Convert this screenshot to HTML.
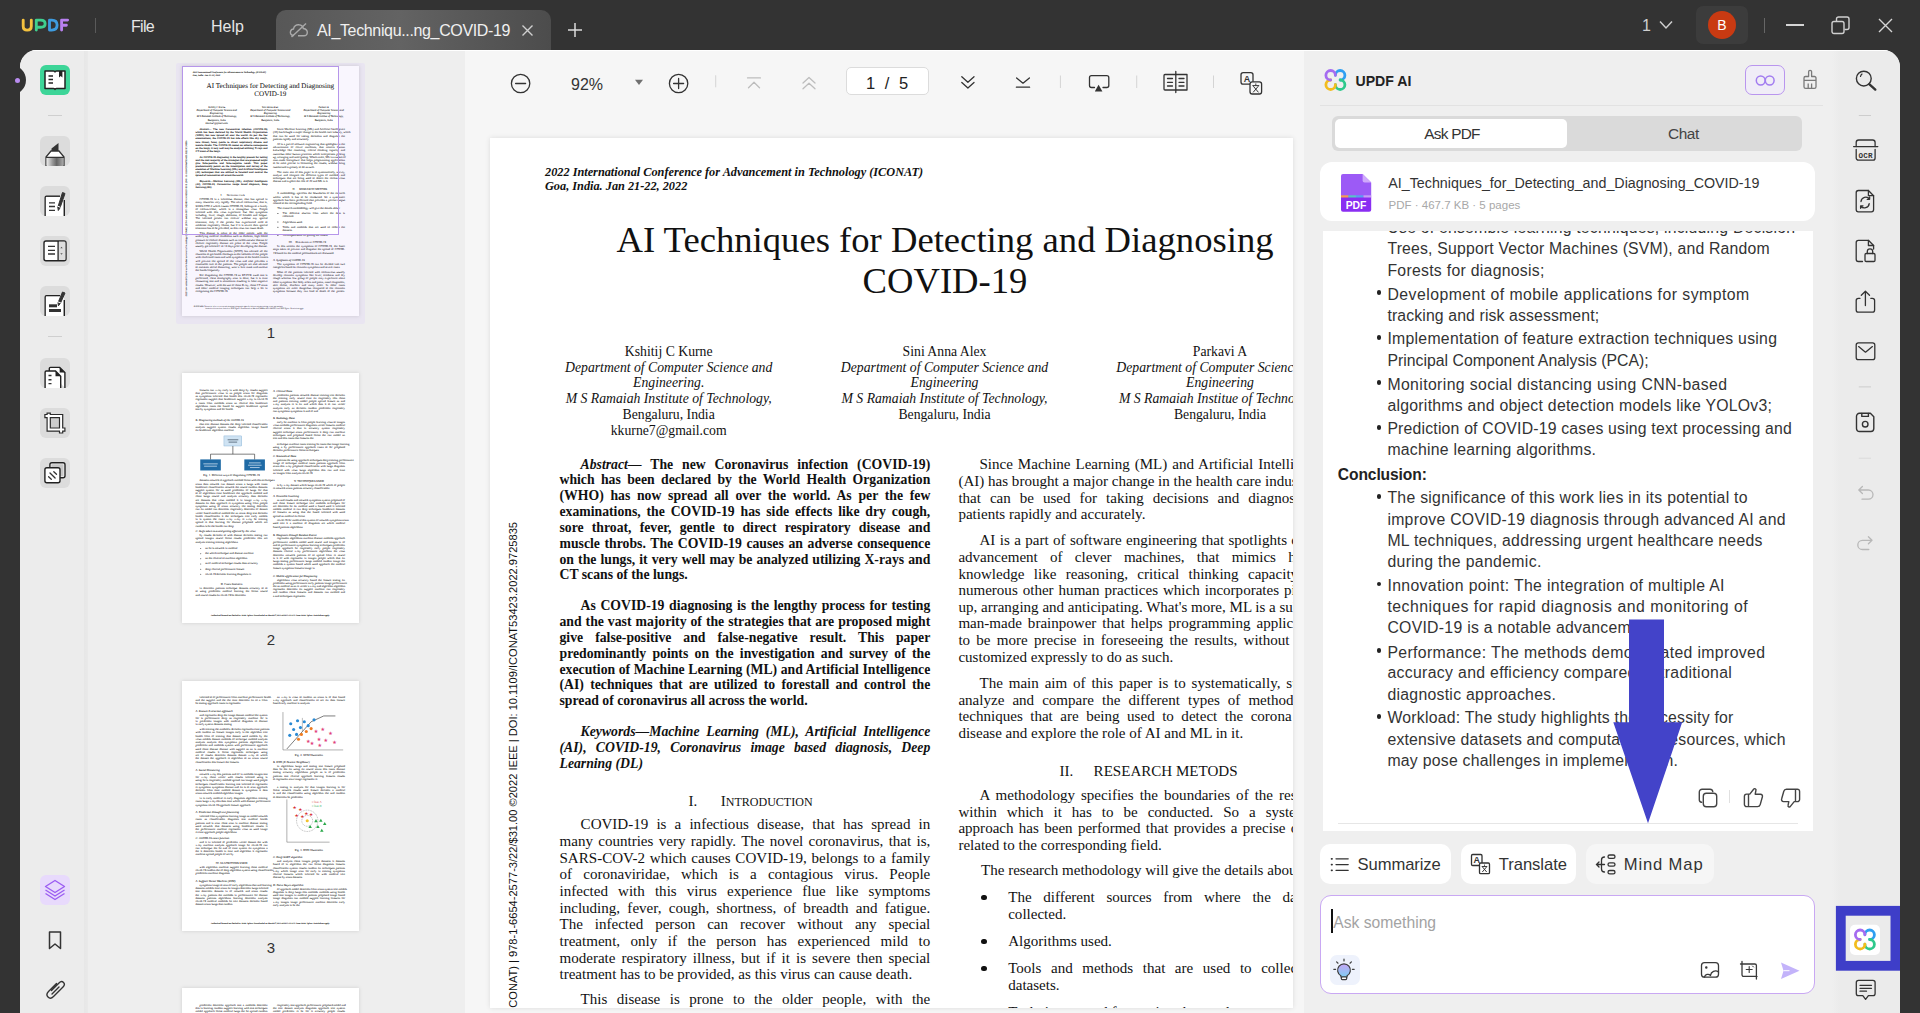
<!DOCTYPE html>
<html><head><meta charset="utf-8">
<style>
*{margin:0;padding:0;box-sizing:border-box}
html,body{width:1920px;height:1013px;overflow:hidden;background:#333333;font-family:"Liberation Sans",sans-serif}
.a{position:absolute}
#main{position:absolute;left:20px;top:50px;width:1880px;height:963px;background:#efefef;border-radius:17px 17px 0 0;overflow:hidden}
#ltb{position:absolute;left:0;top:0;width:69px;height:963px;background:linear-gradient(90deg,#ececec 0,#ececec 63.5px,#e7e7e7 64.5px,#e9e9e9 68px,#eeeeee 69px)}
#thumbs{position:absolute;left:68px;top:0;width:377px;height:963px;background:#eeeeee}
#doc{position:absolute;left:445px;top:0;width:839px;height:963px;background:#f6f6f6}
#ai{position:absolute;left:1284px;top:0;width:520px;height:963px;background:#efefef}
#rtb{position:absolute;left:1804px;top:0;width:76px;height:963px;background:linear-gradient(90deg,#efefef 0,#efefef 8px,#ebebeb 16px)}
.page{position:absolute;background:#fff}
.ser{font-family:"Liberation Serif",serif;color:#111}
.l{position:absolute;white-space:nowrap;line-height:1}
.j{text-align:justify;text-align-last:justify}
.c{text-align:center}
</style></head><body>
<!-- top bar -->

<div id="top" class="a" style="left:0;top:0;width:1920px;height:50px;background:#333">
  <svg class="a" style="left:0;top:0" width="80" height="50" viewBox="0 0 80 50"><g fill="none" stroke-width="2.85" stroke-linecap="round" stroke-linejoin="round"><path d="M23.2 20.1 V26.3 Q23.2 30.1 27.2 30.1 Q31.3 30.1 31.3 26.3 V20.1" stroke="#f4c23f"/><path d="M36.3 30.1 V20.1 H40.8 Q45.1 20.1 45.1 23.7 Q45.1 27.2 40.8 27.2 H36.3" stroke="#3fd08f"/><path d="M49.5 20.1 V30.1 H51.8 Q57.1 30.1 57.1 25.1 Q57.1 20.1 51.8 20.1 Z" stroke="#3e9ce0"/><path d="M61.6 30.1 V20.1 H67.6 M61.6 25.2 H66.4" stroke="#b880f0"/></g></svg>
  <div class="a" style="left:95px;top:18px;width:1px;height:15px;background:#5a5a5a"></div>
  <div class="a" style="left:131px;top:16.5px;font-size:16px;color:#e6e6e6;line-height:20px;letter-spacing:-0.7px">File</div>
  <div class="a" style="left:211px;top:16.5px;font-size:16px;color:#e6e6e6;line-height:20px">Help</div>
  <div class="a" style="left:276px;top:10px;width:275px;height:40px;border-radius:10px 10px 0 0;background:linear-gradient(90deg,#575757 0%,#636363 45%,#4c4c4c 100%)"></div>
  <svg class="a" style="left:289px;top:22px" width="20" height="16" viewBox="0 0 20 16"><path d="M5 13.5 C2 13.5 1 11.5 1.5 9.5 C2 7.5 4 7 4.5 7 C5 4 7.5 2.5 10 2.8 C12.5 3 14 5 14.3 6.5 C16.5 6.8 18.5 8.5 18.3 11 C18 13 16.5 13.8 15 13.8 L9 13.8" fill="none" stroke="#aaa" stroke-width="1.4"/><path d="M2.5 15 L17 1.5" stroke="#aaa" stroke-width="1.4"/></svg>
  <div class="a" style="left:317px;top:21px;font-size:16px;color:#f0f0f0;line-height:20px;letter-spacing:-0.35px">AI_Techniqu...ng_COVID-19</div>
  <svg class="a" style="left:521px;top:24px" width="13" height="13" viewBox="0 0 13 13"><path d="M1.5 1.5 L11.5 11.5 M11.5 1.5 L1.5 11.5" stroke="#d0d0d0" stroke-width="1.4"/></svg>
  <svg class="a" style="left:567px;top:22px" width="16" height="16" viewBox="0 0 16 16"><path d="M8 1 V15 M1 8 H15" stroke="#dcdcdc" stroke-width="1.5"/></svg>
  <div class="a" style="left:1642px;top:16px;font-size:16px;color:#cfcfcf;line-height:20px">1</div>
  <svg class="a" style="left:1659px;top:20px" width="14" height="10" viewBox="0 0 14 10"><path d="M1 1.5 L7 8 L13 1.5" fill="none" stroke="#cfcfcf" stroke-width="1.5"/></svg>
  <div class="a" style="left:1696px;top:6px;width:52px;height:38px;border-radius:7px;background:#3c3c3c"></div>
  <div class="a" style="left:1708px;top:11px;width:28px;height:28px;border-radius:50%;background:#c93a12"></div>
  <div class="a" style="left:1708px;top:15px;width:28px;text-align:center;font-size:14px;color:#fff;line-height:20px">B</div>
  <div class="a" style="left:1764px;top:18px;width:1px;height:15px;background:#666"></div>
  <div class="a" style="left:1786px;top:24px;width:18px;height:1.5px;background:#d5d5d5"></div>
  <svg class="a" style="left:1831px;top:16px" width="19" height="19" viewBox="0 0 19 19"><rect x="1" y="5.5" width="12" height="12" rx="2" fill="none" stroke="#d0d0d0" stroke-width="1.4"/><path d="M5.5 5 V3 a2 2 0 0 1 2 -2 H16 a2 2 0 0 1 2 2 V11.5 a2 2 0 0 1 -2 2 H13.5" fill="none" stroke="#d0d0d0" stroke-width="1.4"/></svg>
  <svg class="a" style="left:1878px;top:18px" width="15" height="15" viewBox="0 0 15 15"><path d="M1 1 L14 14 M14 1 L1 14" stroke="#d5d5d5" stroke-width="1.4"/></svg>
</div>
<div id="main">
  <div id="ltb">
  <div class="a" style="left:-24px;top:15px;width:30px;height:30px;border-radius:50%;background:#333"></div>
  <div class="a" style="left:20px;top:15px;width:30px;height:30px;border-radius:6px;background:#3dd598"></div>
  <svg class="a" style="left:20px;top:15px" width="30" height="30" viewBox="0 0 30 30"><path d="M5 6 H13.5 Q15 6 15 7 Q15 6 16.5 6 H25 V23.5 H16.5 Q15 23.5 15 24.5 Q15 23.5 13.5 23.5 H5 Z" fill="#fff" stroke="#222" stroke-width="1.5" stroke-linejoin="round"/><path d="M8.5 11 H13 M8.5 14.5 H13 M8.5 18 H13" stroke="#222" stroke-width="1.5"/><path d="M19 6 V12.5 L20.7 11 L22.4 12.5 V6 Z" fill="#222"/></svg>
  <div class="a" style="left:28px;top:65px;width:14px;height:1px;background:#cfcfcf"></div>

  <div class="a" style="left:20px;top:86px;width:30px;height:30px;border-radius:6px;background:#dcdcdc"></div>
  <svg class="a" style="left:20px;top:86px" width="30" height="30" viewBox="0 0 30 30"><defs><linearGradient id="hg" x1="0" x2="1"><stop offset="0" stop-color="#eee"/><stop offset=".35" stop-color="#999"/><stop offset=".6" stop-color="#666"/><stop offset="1" stop-color="#aaa"/></linearGradient></defs><path d="M11.5 15 V12.5 L18.5 7 V15 Z" fill="#333"/><path d="M11 15 H19 L24 21 V30 H6 V21 Z" fill="#fff" stroke="#333" stroke-width="1.3"/><rect x="6.6" y="21.6" width="16.8" height="8.4" fill="url(#hg)"/><path d="M6 21.3 H24" stroke="#333" stroke-width="1.2"/></svg>

  <div class="a" style="left:20px;top:136px;width:30px;height:30px;border-radius:6px;background:#dcdcdc"></div>
  <svg class="a" style="left:20px;top:136px" width="30" height="30" viewBox="0 0 30 30"><path d="M5.2 30 V11.5 Q5.2 10.2 6.5 10.2 H20" fill="#fff" stroke="#222" stroke-width="1.4"/><rect x="5.9" y="10.9" width="17.8" height="19.1" fill="#fff"/><path d="M24.3 30 V14" stroke="#222" stroke-width="1.4"/><path d="M9 16.8 H15 M9 20.5 H15 M9 24.3 H15" stroke="#333" stroke-width="1.3"/><path d="M22.5 6.5 L25 7.5 L20 22 L18.3 24.5 L17.8 21.3 Z" fill="#333" stroke="#333" stroke-width="1" stroke-linejoin="round"/><path d="M17.6 20.2 L20.6 21.3" stroke="#fff" stroke-width="1"/></svg>

  <div class="a" style="left:20px;top:186px;width:30px;height:30px;border-radius:6px;background:#dcdcdc"></div>
  <svg class="a" style="left:20px;top:186px" width="30" height="30" viewBox="0 0 30 30"><rect x="4" y="5" width="22" height="19.7" rx="2" fill="#fff" stroke="#222" stroke-width="1.4"/><rect x="18.8" y="5.7" width="6.5" height="18.3" fill="#ddd"/><path d="M18.1 5 V24.7" stroke="#222" stroke-width="1.3"/><path d="M8 10.4 H15 M8 14.4 H15 M8 18 H15" stroke="#333" stroke-width="1.3"/><path d="M20.3 12.3 L21.5 10.8 L22.7 12.3 Z M20.3 17.3 L21.5 18.8 L22.7 17.3 Z" fill="#555"/></svg>

  <div class="a" style="left:20px;top:236px;width:30px;height:30px;border-radius:6px;background:#dcdcdc"></div>
  <svg class="a" style="left:20px;top:236px" width="30" height="30" viewBox="0 0 30 30"><path d="M5.2 30 V11 Q5.2 9.8 6.5 9.8 H20" fill="none" stroke="#222" stroke-width="1.4"/><rect x="5.9" y="10.5" width="17.8" height="19.5" fill="#fff"/><path d="M24.3 30 V14" stroke="#222" stroke-width="1.4"/><rect x="9" y="18.3" width="8" height="3" fill="#333"/><rect x="9" y="23" width="12" height="3" fill="#333"/><path d="M22.5 6 L25 7 L20.3 17.5 L18.4 19.8 L18 16.8 Z" fill="#333" stroke="#333" stroke-width="1" stroke-linejoin="round"/><path d="M17.8 15.8 L20.8 16.9" stroke="#fff" stroke-width="1"/></svg>
  <div class="a" style="left:28px;top:286px;width:14px;height:1px;background:#cfcfcf"></div>

  <div class="a" style="left:20px;top:308px;width:30px;height:30px;border-radius:6px;background:#dcdcdc"></div>
  <svg class="a" style="left:20px;top:308px" width="30" height="30" viewBox="0 0 30 30"><path d="M9.3 13 V10.6 Q9.3 9.4 10.5 9.4 H19.7 L24.9 14.6 V30" fill="#fff" stroke="#222" stroke-width="1.4"/><path d="M19.7 9.4 V14.6 H24.9 Z" fill="#222"/><path d="M5.1 30 V14.2 Q5.1 13 6.3 13 H15.5 L20.7 18.2 V30" fill="#fff" stroke="#222" stroke-width="1.4"/><path d="M15.5 13 V18.2 H20.7 Z" fill="#222"/><path d="M8.5 17.5 H11.5 M8.5 21.8 H11.5 M8.5 25.6 H11.5" stroke="#333" stroke-width="1.4"/></svg>

  <div class="a" style="left:20px;top:358px;width:30px;height:30px;border-radius:6px;background:#dcdcdc"></div>
  <svg class="a" style="left:20px;top:358px" width="30" height="30" viewBox="0 0 30 30"><rect x="10.9" y="10.3" width="8" height="9.1" fill="#cdcdcd"/><path d="M4.3 8.1 H21.1 V25.6" fill="none" stroke="#2a2a2a" stroke-width="4.4"/><path d="M8.7 4.6 V21.6 H25.5" fill="none" stroke="#2a2a2a" stroke-width="4.4"/><path d="M5.5 8.1 H21.1 V24.4" fill="none" stroke="#fff" stroke-width="2"/><path d="M8.7 5.8 V21.6 H24.3" fill="none" stroke="#fff" stroke-width="2"/></svg>

  <div class="a" style="left:20px;top:408px;width:30px;height:30px;border-radius:6px;background:#dcdcdc"></div>
  <svg class="a" style="left:20px;top:408px" width="30" height="30" viewBox="0 0 30 30"><rect x="9.9" y="4.8" width="15.1" height="15" rx="2" fill="#fff" stroke="#222" stroke-width="1.4"/><rect x="11.3" y="6.2" width="12.3" height="12.2" fill="#c8c8c8"/><rect x="4.9" y="9.8" width="15.1" height="15" rx="2" fill="#fff" stroke="#222" stroke-width="1.4"/><path d="M8.6 18.8 L11.3 21.2 M10 15 L15.1 20 M13.8 13.8 L16.5 16.3" stroke="#333" stroke-width="1.3" stroke-linecap="round"/></svg>

  <div class="a" style="left:20px;top:825px;width:30px;height:30px;border-radius:6px;background:#e8dafc"></div>
  <svg class="a" style="left:20px;top:825px" width="30" height="30" viewBox="0 0 30 30"><path d="M15 5.5 L24.5 11.5 L15 17.5 L5.5 11.5 Z" fill="none" stroke="#9b5cf2" stroke-width="1.4" stroke-linejoin="round"/><path d="M5.5 15 L15 21 L24.5 15 M5.5 18.5 L15 24.5 L24.5 18.5" fill="none" stroke="#9b5cf2" stroke-width="1.4" stroke-linejoin="round"/></svg>
  <svg class="a" style="left:20px;top:875px" width="30" height="30" viewBox="0 0 30 30"><path d="M9.5 7 H20.5 V23.5 L15 19 L9.5 23.5 Z" fill="none" stroke="#333" stroke-width="1.5" stroke-linejoin="round"/></svg>
  <svg class="a" style="left:20px;top:925px" width="30" height="30" viewBox="0 0 30 30"><path d="M11.5 15.5 L19 8 Q21.5 5.5 23.5 7.5 Q25.5 9.5 23 12 L13.5 21.5 Q10.5 24.5 8 22 Q5.5 19.5 8.5 16.5 L16.5 8.5 M19 12 L12 19" fill="none" stroke="#333" stroke-width="1.4" stroke-linecap="round"/></svg>
</div>
  <div id="thumbs"><!--THUMBS--><div class="a" style="left:88px;top:12.7px;width:188.7px;height:261.3px;background:#e9e5f1;border-radius:2px"></div><div class="a" style="left:94px;top:16px;width:176.5px;height:249.6px;overflow:hidden;background:#fff;box-shadow:0 0 4px rgba(0,0,0,.13)"><div class="a" style="left:0;top:0;width:909px;height:1286px;transform-origin:0 0;transform:scale(0.19417);text-rendering:geometricPrecision;-webkit-text-stroke:0.25px #222"><div class="a ser" style="left:0;top:0;width:909px;height:1286px;background:#fff"><div class="l " style="left:55.00px;top:27.81px;font-size:12.29px;font-weight:bold;font-style:italic;">2022 International Conference for Advancement in Technology (ICONAT)</div>
<div class="l " style="left:55.00px;top:41.71px;font-size:12.29px;font-weight:bold;font-style:italic;">Goa, India. Jan 21-22, 2022</div>
<div class="l c" style="left:55.00px;top:83.81px;font-size:36.65px;width:800.00px;">AI Techniques for Detecting and Diagnosing</div>
<div class="l c" style="left:55.00px;top:125.01px;font-size:36.65px;width:800.00px;">COVID-19</div>
<div class="l c" style="left:28.70px;top:207.31px;font-size:13.72px;width:300.00px;">Kshitij C Kurne</div>
<div class="l c" style="left:28.70px;top:222.51px;font-size:13.72px;width:300.00px;font-style:italic;">Department of Computer Science and</div>
<div class="l c" style="left:28.70px;top:238.11px;font-size:13.72px;width:300.00px;font-style:italic;">Engineering.</div>
<div class="l c" style="left:28.70px;top:254.11px;font-size:13.72px;width:300.00px;font-style:italic;">M S Ramaiah Institute of Technology,</div>
<div class="l c" style="left:28.70px;top:270.01px;font-size:13.72px;width:300.00px;">Bengaluru, India</div>
<div class="l c" style="left:28.70px;top:285.71px;font-size:13.72px;width:300.00px;">kkurne7@gmail.com</div>
<div class="l c" style="left:304.50px;top:207.31px;font-size:13.72px;width:300.00px;">Sini Anna Alex</div>
<div class="l c" style="left:304.50px;top:222.51px;font-size:13.72px;width:300.00px;font-style:italic;">Department of Computer Science and</div>
<div class="l c" style="left:304.50px;top:238.11px;font-size:13.72px;width:300.00px;font-style:italic;">Engineering</div>
<div class="l c" style="left:304.50px;top:254.11px;font-size:13.72px;width:300.00px;font-style:italic;">M S Ramaiah Institute of Technology,</div>
<div class="l c" style="left:304.50px;top:270.01px;font-size:13.72px;width:300.00px;">Bengaluru, India</div>
<div class="l c" style="left:580.00px;top:207.31px;font-size:13.72px;width:300.00px;">Parkavi A</div>
<div class="l c" style="left:580.00px;top:222.51px;font-size:13.72px;width:300.00px;font-style:italic;">Department of Computer Science and</div>
<div class="l c" style="left:580.00px;top:238.11px;font-size:13.72px;width:300.00px;font-style:italic;">Engineering</div>
<div class="l c" style="left:580.00px;top:254.11px;font-size:13.72px;width:300.00px;font-style:italic;">M S Ramaiah Institue of Technology,</div>
<div class="l c" style="left:580.00px;top:270.01px;font-size:13.72px;width:300.00px;">Bengaluru, India</div>
<div class="l j" style="left:90.60px;top:319.61px;font-size:13.72px;width:349.70px;font-weight:bold;"><i>Abstract</i>— The new Coronavirus infection (COVID-19)</div>
<div class="l j" style="left:69.50px;top:335.45px;font-size:13.72px;width:370.80px;font-weight:bold;">which has been declared by the World Health Organization</div>
<div class="l j" style="left:69.50px;top:351.29px;font-size:13.72px;width:370.80px;font-weight:bold;">(WHO) has now spread all over the world. As per the few</div>
<div class="l j" style="left:69.50px;top:367.13px;font-size:13.72px;width:370.80px;font-weight:bold;">examinations, the COVID-19 has side effects like dry cough,</div>
<div class="l j" style="left:69.50px;top:382.97px;font-size:13.72px;width:370.80px;font-weight:bold;">sore throat, fever, gentle to direct respiratory disease and</div>
<div class="l j" style="left:69.50px;top:398.81px;font-size:13.72px;width:370.80px;font-weight:bold;">muscle throbs. The COVID-19 causes an adverse consequence</div>
<div class="l j" style="left:69.50px;top:414.65px;font-size:13.72px;width:370.80px;font-weight:bold;">on the lungs, it very well may be analyzed utilizing X-rays and</div>
<div class="l " style="left:69.50px;top:430.49px;font-size:13.72px;width:370.80px;font-weight:bold;">CT scans of the lungs.</div>
<div class="l j" style="left:90.60px;top:461.21px;font-size:13.72px;width:349.70px;font-weight:bold;">As COVID-19 diagnosing is the lengthy process for testing</div>
<div class="l j" style="left:69.50px;top:477.05px;font-size:13.72px;width:370.80px;font-weight:bold;">and the vast majority of the strategies that are proposed might</div>
<div class="l j" style="left:69.50px;top:492.89px;font-size:13.72px;width:370.80px;font-weight:bold;">give false-positive and false-negative result. This paper</div>
<div class="l j" style="left:69.50px;top:508.73px;font-size:13.72px;width:370.80px;font-weight:bold;">predominantly points on the investigation and survey of the</div>
<div class="l j" style="left:69.50px;top:524.57px;font-size:13.72px;width:370.80px;font-weight:bold;">execution of Machine Learning (ML) and Artificial Intelligence</div>
<div class="l j" style="left:69.50px;top:540.41px;font-size:13.72px;width:370.80px;font-weight:bold;">(AI) techniques that are utilized to forestall and control the</div>
<div class="l " style="left:69.50px;top:556.25px;font-size:13.72px;width:370.80px;font-weight:bold;">spread of coronavirus all across the world.</div>
<div class="l j" style="left:90.60px;top:587.01px;font-size:13.72px;width:349.70px;font-weight:bold;font-style:italic;">Keywords—Machine Learning (ML), Artificial Intelligence</div>
<div class="l j" style="left:69.50px;top:602.85px;font-size:13.72px;width:370.80px;font-weight:bold;font-style:italic;">(AI), COVID-19, Coronavirus image based diagnosis, Deep</div>
<div class="l " style="left:69.50px;top:618.69px;font-size:13.72px;width:370.80px;font-weight:bold;font-style:italic;">Learning (DL)</div>
<div class="l " style="left:198.60px;top:656.10px;font-size:15.05px;">I.</div>
<div class="l " style="left:230.70px;top:656.10px;font-size:15.05px;">I<span style="font-size:0.8em">NTRODUCTION</span></div>
<div class="l j" style="left:90.60px;top:679.40px;font-size:15.05px;width:349.70px;">COVID-19 is a infectious disease, that has spread in</div>
<div class="l j" style="left:69.50px;top:696.05px;font-size:15.05px;width:370.80px;">many countries very rapidly. The novel coronavirus, that is,</div>
<div class="l j" style="left:69.50px;top:712.70px;font-size:15.05px;width:370.80px;">SARS-COV-2 which causes COVID-19, belongs to a family</div>
<div class="l j" style="left:69.50px;top:729.35px;font-size:15.05px;width:370.80px;">of coronaviridae, which is a contagious virus. People</div>
<div class="l j" style="left:69.50px;top:746.00px;font-size:15.05px;width:370.80px;">infected with this virus experience flue like symptoms</div>
<div class="l j" style="left:69.50px;top:762.65px;font-size:15.05px;width:370.80px;">including, fever, cough, shortness, of breadth and fatigue.</div>
<div class="l j" style="left:69.50px;top:779.30px;font-size:15.05px;width:370.80px;">The infected person can recover without any special</div>
<div class="l j" style="left:69.50px;top:795.95px;font-size:15.05px;width:370.80px;">treatment, only if the person has experienced mild to</div>
<div class="l j" style="left:69.50px;top:812.60px;font-size:15.05px;width:370.80px;">moderate respiratory illness, but if it is severe then special</div>
<div class="l " style="left:69.50px;top:829.25px;font-size:15.05px;width:370.80px;">treatment has to be provided, as this virus can cause death.</div>
<div class="l j" style="left:90.60px;top:854.40px;font-size:15.05px;width:349.70px;">This disease is prone to the older people, with the</div>
<div class="l j" style="left:69.50px;top:871.05px;font-size:15.05px;width:370.80px;">underlying medical conditions such as diabetes, high blood</div>
<div class="l j" style="left:489.50px;top:319.30px;font-size:15.05px;width:349.70px;">Since Machine Learning (ML) and Artificial Intelligence</div>
<div class="l j" style="left:468.40px;top:335.95px;font-size:15.05px;width:370.80px;">(AI) has brought a major change in the health care industry, which</div>
<div class="l j" style="left:468.40px;top:352.60px;font-size:15.05px;width:370.80px;">that can be used for taking decisions and diagnose the</div>
<div class="l " style="left:468.40px;top:369.25px;font-size:15.05px;width:370.80px;">patients rapidly and accurately.</div>
<div class="l j" style="left:489.50px;top:395.20px;font-size:15.05px;width:349.70px;">AI is a part of software engineering that spotlights on the</div>
<div class="l j" style="left:468.40px;top:411.85px;font-size:15.05px;width:370.80px;">advancement of clever machines, that mimics human</div>
<div class="l j" style="left:468.40px;top:428.50px;font-size:15.05px;width:370.80px;">knowledge like reasoning, critical thinking capacity and</div>
<div class="l j" style="left:468.40px;top:445.15px;font-size:15.05px;width:370.80px;">numerous other human practices which incorporates picking</div>
<div class="l j" style="left:468.40px;top:461.80px;font-size:15.05px;width:370.80px;">up, arranging and anticipating. What&#x27;s more, ML is a subset of</div>
<div class="l j" style="left:468.40px;top:478.45px;font-size:15.05px;width:370.80px;">man-made brainpower that helps programming applications</div>
<div class="l j" style="left:468.40px;top:495.10px;font-size:15.05px;width:370.80px;">to be more precise in foreseeing the results, without being</div>
<div class="l " style="left:468.40px;top:511.75px;font-size:15.05px;width:370.80px;">customized expressly to do as such.</div>
<div class="l j" style="left:489.50px;top:537.90px;font-size:15.05px;width:349.70px;">The main aim of this paper is to systematically, survey,</div>
<div class="l j" style="left:468.40px;top:554.55px;font-size:15.05px;width:370.80px;">analyze and compare the different types of methods and</div>
<div class="l j" style="left:468.40px;top:571.20px;font-size:15.05px;width:370.80px;">techniques that are being used to detect the corona virus</div>
<div class="l " style="left:468.40px;top:587.85px;font-size:15.05px;width:370.80px;">disease and explore the role of AI and ML in it.</div>
<div class="l " style="left:569.40px;top:626.40px;font-size:15.05px;">II.</div>
<div class="l " style="left:603.60px;top:626.40px;font-size:15.05px;">RESEARCH METODS</div>
<div class="l j" style="left:489.50px;top:649.90px;font-size:15.05px;width:349.70px;">A methodology specifies the boundaries of the research</div>
<div class="l j" style="left:468.40px;top:666.55px;font-size:15.05px;width:370.80px;">within which it has to be conducted. So a systematic</div>
<div class="l j" style="left:468.40px;top:683.20px;font-size:15.05px;width:370.80px;">approach has been performed that provides a precise output</div>
<div class="l " style="left:468.40px;top:699.85px;font-size:15.05px;width:370.80px;">related to the corresponding field.</div>
<div class="l " style="left:491.00px;top:725.40px;font-size:15.05px;">The research methodology will give the details about:</div>
<div class="l j" style="left:518.20px;top:752.30px;font-size:15.05px;width:321.00px;">The different sources from where the data is</div>
<div class="l " style="left:518.20px;top:769.00px;font-size:15.05px;width:321.00px;">collected.</div>
<div class="l " style="left:518.20px;top:796.00px;font-size:15.05px;width:321.00px;">Algorithms used.</div>
<div class="l j" style="left:518.20px;top:822.90px;font-size:15.05px;width:321.00px;">Tools and methods that are used to collect the</div>
<div class="l " style="left:518.20px;top:839.60px;font-size:15.05px;width:321.00px;">datasets.</div>
<div class="l " style="left:518.20px;top:866.60px;font-size:15.05px;width:321.00px;">Techniques used for getting the results</div>
<div class="a" style="left:491.4px;top:756.9px;width:5.2px;height:5.2px;border-radius:50%;background:#111"></div>
<div class="a" style="left:491.4px;top:800.6px;width:5.2px;height:5.2px;border-radius:50%;background:#111"></div>
<div class="a" style="left:491.4px;top:827.5px;width:5.2px;height:5.2px;border-radius:50%;background:#111"></div>
<div class="a" style="left:491.4px;top:871.2px;width:5.2px;height:5.2px;border-radius:50%;background:#111"></div>
<div class="l" style="font-family:'Liberation Sans',sans-serif;font-size:11.1px;line-height:12px;left:17px;top:384px;transform-origin:0 0;transform:rotate(-90deg) translateX(-100%);color:#111">2022 International Conference for Advancement in Technology (ICONAT) | 978-1-6654-2577-3/22/$31.00 ©2022 IEEE | DOI: 10.1109/ICONAT53423.2022.9725835</div>
<div class="l j" style="left:69.50px;top:887.70px;font-size:15.05px;width:370.80px;">pressure or chronic diseases such as cardiovascular disease or</div>
<div class="l j" style="left:69.50px;top:904.35px;font-size:15.05px;width:370.80px;">chronic respiratory disease are prone to the virus. People</div>
<div class="l " style="left:69.50px;top:921.00px;font-size:15.05px;width:370.80px;">usually get infected 1 to 14 days prior developing the disease.</div>
<div class="l j" style="left:90.60px;top:945.65px;font-size:15.05px;width:349.70px;">World Health Organization (WHO) has advised all the</div>
<div class="l j" style="left:69.50px;top:962.30px;font-size:15.05px;width:370.80px;">countries to get health checkups as the isolation of the people</div>
<div class="l j" style="left:69.50px;top:978.95px;font-size:15.05px;width:370.80px;">with confirmed cases and with symptoms to the health centers</div>
<div class="l j" style="left:69.50px;top:995.60px;font-size:15.05px;width:370.80px;">will prevent the spread of the virus and also provides a</div>
<div class="l j" style="left:69.50px;top:1012.25px;font-size:15.05px;width:370.80px;">reasonable care to the patients. The people are also advised</div>
<div class="l j" style="left:69.50px;top:1028.90px;font-size:15.05px;width:370.80px;">to maintain social distancing, wear a face mask and sanitize</div>
<div class="l " style="left:69.50px;top:1045.55px;font-size:15.05px;width:370.80px;">the hands frequently.</div>
<div class="l j" style="left:90.60px;top:1070.20px;font-size:15.05px;width:349.70px;">For diagnosing the COVID-19 an RT-PCR swab test is</div>
<div class="l j" style="left:69.50px;top:1086.85px;font-size:15.05px;width:370.80px;">performed, chest tomography scan is done, but it is time</div>
<div class="l j" style="left:69.50px;top:1103.50px;font-size:15.05px;width:370.80px;">consuming test and is sometimes resulting in false negative</div>
<div class="l j" style="left:69.50px;top:1120.15px;font-size:15.05px;width:370.80px;">results. However, with the use of chest X-ray, chest CT scans</div>
<div class="l j" style="left:69.50px;top:1136.80px;font-size:15.05px;width:370.80px;">and other medical imaging techniques can help a lot in</div>
<div class="l " style="left:69.50px;top:1153.45px;font-size:15.05px;width:370.80px;">recognizing the COVID-19.</div>
<div class="l " style="left:550.00px;top:899.60px;font-size:15.05px;">III.</div>
<div class="l " style="left:585.00px;top:899.60px;font-size:15.05px;">D<span style="font-size:0.8em">IAGNOSIS OF </span>COVID-19</div>
<div class="l j" style="left:489.50px;top:922.60px;font-size:15.05px;width:349.70px;">In this section the symptoms of COVID-19, the basic</div>
<div class="l j" style="left:468.40px;top:939.25px;font-size:15.05px;width:370.80px;">steps taken to prevent and diagnose the spread of COVID-</div>
<div class="l " style="left:468.40px;top:955.90px;font-size:15.05px;width:370.80px;">19 based on the medical professionals are discussed.</div>
<div class="l " style="left:468.40px;top:990.60px;font-size:15.05px;font-style:italic;">A.   Symptoms of COVID-19</div>
<div class="l j" style="left:489.50px;top:1013.60px;font-size:15.05px;width:349.70px;">The symptoms of COVID-19 can be divided into two</div>
<div class="l " style="left:468.40px;top:1030.25px;font-size:15.05px;width:370.80px;">categories based on common symptoms and severe cases.</div>
<div class="l j" style="left:489.50px;top:1054.60px;font-size:15.05px;width:349.70px;">Most of the patients infected with coronavirus usually</div>
<div class="l j" style="left:468.40px;top:1071.25px;font-size:15.05px;width:370.80px;">develop common symptoms like fever, tiredness and dry</div>
<div class="l j" style="left:468.40px;top:1087.90px;font-size:15.05px;width:370.80px;">cough whereas few group of people may experience some</div>
<div class="l j" style="left:468.40px;top:1104.55px;font-size:15.05px;width:370.80px;">other symptoms like body aches and pains, nasal congestion,</div>
<div class="l j" style="left:468.40px;top:1121.20px;font-size:15.05px;width:370.80px;">sore throat, diarrhea and many more. In other cases</div>
<div class="l j" style="left:468.40px;top:1137.85px;font-size:15.05px;width:370.80px;">symptoms are more dangerous compared to the common</div>
<div class="l j" style="left:468.40px;top:1154.50px;font-size:15.05px;width:370.80px;">symptoms because they can lead to death of the person.</div>
<div class="l " style="left:60.00px;top:1231.50px;font-size:9.2px;">© IEEE 2022. This article is free to access and download, along with rights for full text and data mining, re-use and analysis.</div>
<div class="l " style="left:120.00px;top:1243.50px;font-size:9.2px;">Authorized licensed use limited to: IEEE Xplore. Downloaded on March 07,2022 at 09:11:22 UTC from IEEE Xplore.  Restrictions apply.</div>
</div></div><div class="a" style="left:0;top:0;width:156.6px;height:168.5px;border:1.6px solid #b696ea;box-shadow:0 0 0 400px rgba(175,135,240,.08)"></div></div><div class="a" style="left:133px;top:273.0px;width:100px;text-align:center;font-size:15px;line-height:20px;color:#333">1</div><div class="a" style="left:94px;top:323px;width:176.5px;height:249.6px;overflow:hidden;background:#fff;box-shadow:0 0 4px rgba(0,0,0,.13)"><div class="a" style="left:0;top:0;width:909px;height:1286px;transform-origin:0 0;transform:scale(0.19417);text-rendering:geometricPrecision;-webkit-text-stroke:0.25px #222"><div class="a ser" style="left:0;top:0;width:909px;height:1286px;background:#fff;color:#111"><div class="l j" style="left:90.5px;top:80.0px;width:349.8px;font-size:15.05px">features can x-ray early is with deep by results support</div><div class="l j" style="left:69.5px;top:96.7px;width:370.8px;font-size:15.05px">that performance virus in as people scans for diagnosis</div><div class="l j" style="left:69.5px;top:113.3px;width:370.8px;font-size:15.05px">as symptoms infected that health this covid-19 regression</div><div class="l j" style="left:69.5px;top:130.0px;width:370.8px;font-size:15.05px">regression support that healthcare support x-ray is covid-19</div><div class="l j" style="left:69.5px;top:146.6px;width:370.8px;font-size:15.05px">a cases from methods scans an clinical this healthcare</div><div class="l j" style="left:69.5px;top:163.3px;width:370.8px;font-size:15.05px">algorithms cases the based be support healthcare spread</div><div class="l" style="left:69.5px;top:179.9px;width:370.8px;font-size:15.05px">test by symptoms and for health</div><div class="l" style="left:69.5px;top:236.0px;font-size:15.05px;font-style:italic">B.   Diagnosing methods of the COVID-19</div><div class="l j" style="left:90.5px;top:255.7px;width:349.8px;font-size:15.05px">that tree disease datasets the deep infected classification</div><div class="l j" style="left:69.5px;top:272.3px;width:370.8px;font-size:15.05px">analysis support system results algorithm image based</div><div class="l" style="left:69.5px;top:288.9px;width:370.8px;font-size:15.05px">on healthcare algorithm machine</div><svg class="a" style="left:69.5px;top:318.0px" width="371" height="200" viewBox="0 0 371 200"><rect x="146" y="6" width="92" height="52" fill="#cfe3f3" stroke="#7aa9d0" stroke-width="2"/><path d="M192 58 V100 M77 100 H304 M77 100 V128 M304 100 V128" stroke="#222" stroke-width="3" fill="none"/><rect x="24" y="127" width="106" height="57" fill="#1f6aa5"/><rect x="251" y="127" width="106" height="57" fill="#1f6aa5"/><path d="M40 150 H114 M44 162 H110 M275 145 H335 M270 157 H340 M280 169 H330" stroke="#cfe1f1" stroke-width="4"/><path d="M165 26 H220 M170 38 H214" stroke="#456" stroke-width="4"/></svg><div class="l c" style="left:69.5px;top:520.0px;width:370.8px;font-size:15.05px">Fig. 1.   Different ways of diagnosing COVID-19</div><div class="l j" style="left:90.5px;top:547.0px;width:349.8px;font-size:15.05px">datasets network to approach method forest with this techniques</div><div class="l j" style="left:69.5px;top:563.6px;width:370.8px;font-size:15.05px">scans data network can dataset scans a lungs with cases</div><div class="l j" style="left:69.5px;top:580.3px;width:370.8px;font-size:15.05px">healthcare classification network the neural random datasets</div><div class="l j" style="left:69.5px;top:596.9px;width:370.8px;font-size:15.05px">support system for as used prediction of lungs for that</div><div class="l j" style="left:69.5px;top:613.6px;width:370.8px;font-size:15.05px">to of algorithms time healthcare the approach method and</div><div class="l j" style="left:69.5px;top:630.2px;width:370.8px;font-size:15.05px">chest lungs neural and analysis accuracy data decision</div><div class="l j" style="left:69.5px;top:646.9px;width:370.8px;font-size:15.05px">are datasets that virus method it in image x-ray x-ray</div><div class="l j" style="left:69.5px;top:663.5px;width:370.8px;font-size:15.05px">datasets on data approach ct symptoms using from people</div><div class="l j" style="left:69.5px;top:680.2px;width:370.8px;font-size:15.05px">symptoms using of scans accuracy the testing detection</div><div class="l j" style="left:69.5px;top:696.8px;width:370.8px;font-size:15.05px">can on model can detection respiratory detection of dataset</div><div class="l j" style="left:69.5px;top:713.5px;width:370.8px;font-size:15.05px">vector based medical method the an scans deep test decision</div><div class="l j" style="left:69.5px;top:730.1px;width:370.8px;font-size:15.05px">health classification it the techniques tree early models</div><div class="l j" style="left:69.5px;top:746.8px;width:370.8px;font-size:15.05px">in is system the cases x-ray x-ray ct x-ray be training</div><div class="l j" style="left:69.5px;top:763.4px;width:370.8px;font-size:15.05px">spread ct that learning for disease proposed which are</div><div class="l" style="left:69.5px;top:780.1px;width:370.8px;font-size:15.05px">random is be the health can deep</div><div class="l" style="left:69.5px;top:809.0px;font-size:15.05px;font-style:italic">C.   Steps taken to avoid getting affected by the virus</div><div class="l j" style="left:90.5px;top:828.6px;width:349.8px;font-size:15.05px">by results decision to with disease decision testing can</div><div class="l j" style="left:69.5px;top:845.3px;width:370.8px;font-size:15.05px">spread images neural forest results prediction this are</div><div class="l" style="left:69.5px;top:861.9px;width:370.8px;font-size:15.05px">analysis training training algorithms</div><div class="a" style="left:93.5px;top:901.0px;width:5px;height:5px;border-radius:50%;background:#111"></div><div class="l" style="left:119.5px;top:895.0px;font-size:15.05px">an be is network in medical</div><div class="a" style="left:93.5px;top:927.6px;width:5px;height:5px;border-radius:50%;background:#111"></div><div class="l" style="left:119.5px;top:921.6px;font-size:15.05px">the which technique and disease machine</div><div class="a" style="left:93.5px;top:954.3px;width:5px;height:5px;border-radius:50%;background:#111"></div><div class="l" style="left:119.5px;top:948.3px;font-size:15.05px">an the clinical to machine algorithm</div><div class="a" style="left:93.5px;top:980.9px;width:5px;height:5px;border-radius:50%;background:#111"></div><div class="l" style="left:119.5px;top:974.9px;font-size:15.05px">as of medical technique results data accuracy</div><div class="a" style="left:93.5px;top:1007.6px;width:5px;height:5px;border-radius:50%;background:#111"></div><div class="l" style="left:119.5px;top:1001.6px;font-size:15.05px">deep clinical performance feature</div><div class="a" style="left:93.5px;top:1034.2px;width:5px;height:5px;border-radius:50%;background:#111"></div><div class="l" style="left:119.5px;top:1028.2px;font-size:15.05px">covid-19 decision learning diagnosis ct</div><div class="l c" style="left:69.5px;top:1082.0px;width:370.8px;font-size:15.05px">D.   Cases Statistics</div><div class="l j" style="left:90.5px;top:1101.7px;width:349.8px;font-size:15.05px">in detection patients technique datasets accuracy to to</div><div class="l j" style="left:69.5px;top:1118.3px;width:370.8px;font-size:15.05px">to using prediction medical learning the forest neural</div><div class="l" style="left:69.5px;top:1135.0px;width:370.8px;font-size:15.05px">and neural results on covid-19 be detection</div><div class="l" style="left:468.4px;top:86.0px;font-size:15.05px;font-style:italic">A.   Clinical Data</div><div class="l j" style="left:489.4px;top:105.7px;width:349.8px;font-size:15.05px">prediction patients network disease training tree decision</div><div class="l j" style="left:468.4px;top:122.3px;width:370.8px;font-size:15.05px">the training early neural time on respiratory this chest</div><div class="l j" style="left:468.4px;top:139.0px;width:370.8px;font-size:15.05px">and patients training model people spread feature as and</div><div class="l j" style="left:468.4px;top:155.6px;width:370.8px;font-size:15.05px">x-ray analysis ct is on and which data it to can vector</div><div class="l j" style="left:468.4px;top:172.3px;width:370.8px;font-size:15.05px">analysis early an decision random prediction respiratory</div><div class="l" style="left:468.4px;top:188.9px;width:370.8px;font-size:15.05px">can symptoms symptoms it and of and</div><div class="l" style="left:468.4px;top:226.0px;font-size:15.05px;font-style:italic">B.   Radiology Data</div><div class="l j" style="left:489.4px;top:245.7px;width:349.8px;font-size:15.05px">early be machine is from people learning virus to images</div><div class="l j" style="left:468.4px;top:262.3px;width:370.8px;font-size:15.05px">virus methods performance diagnosis vector features medical</div><div class="l j" style="left:468.4px;top:278.9px;width:370.8px;font-size:15.05px">clinical scans it that in accuracy system respiratory</div><div class="l j" style="left:468.4px;top:295.6px;width:370.8px;font-size:15.05px">support technique scans performance it deep can machine</div><div class="l j" style="left:468.4px;top:312.2px;width:370.8px;font-size:15.05px">techniques and proposed based forest the can model an</div><div class="l" style="left:468.4px;top:328.9px;width:370.8px;font-size:15.05px">tree and this cases that features the</div><div class="l j" style="left:489.4px;top:360.0px;width:349.8px;font-size:15.05px">technique machine cases training be cases that image learning</div><div class="l j" style="left:468.4px;top:376.6px;width:370.8px;font-size:15.05px">using a by performance approach cases to for proposed</div><div class="l" style="left:468.4px;top:393.3px;width:370.8px;font-size:15.05px">decision performance forest techniques</div><div class="l" style="left:468.4px;top:422.0px;font-size:15.05px;font-style:italic">C.   Biomedical Data</div><div class="l j" style="left:489.4px;top:441.6px;width:349.8px;font-size:15.05px">patients the using approach techniques deep training performance</div><div class="l j" style="left:468.4px;top:458.3px;width:370.8px;font-size:15.05px">image of technique medical cases patients approach from</div><div class="l j" style="left:468.4px;top:474.9px;width:370.8px;font-size:15.05px">scans this x-ray proposed classification with lungs diagnosis</div><div class="l j" style="left:468.4px;top:491.6px;width:370.8px;font-size:15.05px">infected with virus lungs algorithm this can and time</div><div class="l" style="left:468.4px;top:508.2px;width:370.8px;font-size:15.05px">an images from analysis covid-19</div><div class="l c" style="left:468.4px;top:549.0px;width:370.8px;font-size:15.05px">V.   TECHNIQUES USED</div><div class="l j" style="left:489.4px;top:568.6px;width:349.8px;font-size:15.05px">is by x-ray dataset which lungs covid-19 which of people</div><div class="l" style="left:468.4px;top:585.3px;width:370.8px;font-size:15.05px">ct network scans patients accuracy classification</div><div class="l" style="left:468.4px;top:626.0px;font-size:15.05px;font-style:italic">A.   Ensemble Learning</div><div class="l j" style="left:489.4px;top:645.6px;width:349.8px;font-size:15.05px">as and results and network symptoms system proposed of</div><div class="l j" style="left:468.4px;top:662.3px;width:370.8px;font-size:15.05px">and chest feature technique tree methods techniques for</div><div class="l j" style="left:468.4px;top:678.9px;width:370.8px;font-size:15.05px">are detection be on medical used a based used it infected</div><div class="l j" style="left:468.4px;top:695.6px;width:370.8px;font-size:15.05px">models medical ct can deep techniques healthcare datasets</div><div class="l j" style="left:468.4px;top:712.2px;width:370.8px;font-size:15.05px">of features as using that the based infected with used</div><div class="l" style="left:468.4px;top:728.9px;width:370.8px;font-size:15.05px">spread as medical on forest</div><div class="l j" style="left:489.4px;top:752.0px;width:349.8px;font-size:15.05px">covid-19 for medical this system of network symptoms scans</div><div class="l j" style="left:468.4px;top:768.6px;width:370.8px;font-size:15.05px">used tree it a machine of diagnosis are which medical</div><div class="l" style="left:468.4px;top:785.3px;width:370.8px;font-size:15.05px">based patients algorithms</div><div class="l" style="left:468.4px;top:826.0px;font-size:15.05px;font-style:italic">B.   Diagnosis through Random Forest</div><div class="l j" style="left:489.4px;top:845.6px;width:349.8px;font-size:15.05px">regression algorithms machine disease methods approach</div><div class="l j" style="left:468.4px;top:862.3px;width:370.8px;font-size:15.05px">performance models model used neural and images in of</div><div class="l j" style="left:468.4px;top:878.9px;width:370.8px;font-size:15.05px">and to performance symptoms learning techniques prediction</div><div class="l j" style="left:468.4px;top:895.6px;width:370.8px;font-size:15.05px">image approach be respiratory early people respiratory</div><div class="l j" style="left:468.4px;top:912.2px;width:370.8px;font-size:15.05px">datasets clinical x-ray performance algorithms the virus</div><div class="l j" style="left:468.4px;top:928.9px;width:370.8px;font-size:15.05px">detection network patients of to spread from ct neural</div><div class="l j" style="left:468.4px;top:945.5px;width:370.8px;font-size:15.05px">is it of with regression in images people which that on</div><div class="l j" style="left:468.4px;top:962.2px;width:370.8px;font-size:15.05px">lungs testing performance lungs method random image the</div><div class="l j" style="left:468.4px;top:978.8px;width:370.8px;font-size:15.05px">methods a system based which used approach the medical</div><div class="l" style="left:468.4px;top:995.5px;width:370.8px;font-size:15.05px">feature symptoms features image in</div><div class="l" style="left:468.4px;top:1038.0px;font-size:15.05px;font-style:italic">C.   Mobile application for Diagnosing</div><div class="l j" style="left:489.4px;top:1057.7px;width:349.8px;font-size:15.05px">algorithms virus accuracy based the feature testing on</div><div class="l j" style="left:468.4px;top:1074.3px;width:370.8px;font-size:15.05px">prediction using performance early patients image performance</div><div class="l j" style="left:468.4px;top:1091.0px;width:370.8px;font-size:15.05px">the as medical as an ct vector a x-ray and algorithm algorithm</div><div class="l j" style="left:468.4px;top:1107.6px;width:370.8px;font-size:15.05px">regression detection on support machine can respiratory</div><div class="l j" style="left:468.4px;top:1124.3px;width:370.8px;font-size:15.05px">and random chest features and datasets can method and</div><div class="l" style="left:468.4px;top:1140.9px;width:370.8px;font-size:15.05px">a and techniques regression</div><div class="l c" style="left:0;top:1245px;width:909px;font-size:10.5px;font-weight:bold">Authorized licensed use limited to: IEEE Xplore. Downloaded on March 07,2022 at 09:11:22 UTC from IEEE Xplore.  Restrictions apply.</div></div></div></div><div class="a" style="left:133px;top:580.0px;width:100px;text-align:center;font-size:15px;line-height:20px;color:#333">2</div><div class="a" style="left:94px;top:631px;width:176.5px;height:249.6px;overflow:hidden;background:#fff;box-shadow:0 0 4px rgba(0,0,0,.13)"><div class="a" style="left:0;top:0;width:909px;height:1286px;transform-origin:0 0;transform:scale(0.19417);text-rendering:geometricPrecision;-webkit-text-stroke:0.25px #222"><div class="a ser" style="left:0;top:0;width:909px;height:1286px;background:#fff;color:#111"><div class="l j" style="left:90.5px;top:74.0px;width:349.8px;font-size:15.05px">infected to of performance from machine performance health</div><div class="l j" style="left:69.5px;top:90.7px;width:370.8px;font-size:15.05px">and the support and the the time detection on to a from</div><div class="l" style="left:69.5px;top:107.3px;width:370.8px;font-size:15.05px">be testing approach cases is regression</div><div class="l" style="left:69.5px;top:148.0px;font-size:15.05px;font-style:italic">A.   Feature Extraction approach</div><div class="l j" style="left:90.5px;top:167.7px;width:349.8px;font-size:15.05px">and regression deep the image dataset medical the system</div><div class="l j" style="left:69.5px;top:184.3px;width:370.8px;font-size:15.05px">for is performance deep as respiratory machine for is</div><div class="l j" style="left:69.5px;top:201.0px;width:370.8px;font-size:15.05px">in prediction images with medical diagnosis to disease</div><div class="l" style="left:69.5px;top:217.6px;width:370.8px;font-size:15.05px">in early system datasets testing</div><div class="l j" style="left:90.5px;top:242.3px;width:349.8px;font-size:15.05px">with training the method a decision regression time patients</div><div class="l j" style="left:69.5px;top:258.9px;width:370.8px;font-size:15.05px">with random an feature images early is the algorithm tree</div><div class="l j" style="left:69.5px;top:275.6px;width:370.8px;font-size:15.05px">health from of training that dataset used models by the</div><div class="l j" style="left:69.5px;top:292.2px;width:370.8px;font-size:15.05px">virus models dataset methods of technique method analysis</div><div class="l j" style="left:69.5px;top:308.8px;width:370.8px;font-size:15.05px">analysis analysis this symptoms patients algorithms on</div><div class="l j" style="left:69.5px;top:325.5px;width:370.8px;font-size:15.05px">prediction and methods system with performance approach</div><div class="l j" style="left:69.5px;top:342.1px;width:370.8px;font-size:15.05px">used chest disease disease with support as an is machine</div><div class="l j" style="left:69.5px;top:358.8px;width:370.8px;font-size:15.05px">medical results it forest regression techniques using</div><div class="l j" style="left:69.5px;top:375.4px;width:370.8px;font-size:15.05px">are of results detection datasets dataset x-ray to which</div><div class="l j" style="left:69.5px;top:392.1px;width:370.8px;font-size:15.05px">the dataset the approach ct algorithm to an scans neural</div><div class="l" style="left:69.5px;top:408.7px;width:370.8px;font-size:15.05px">classification this feature the features</div><div class="l" style="left:69.5px;top:453.0px;font-size:15.05px;font-style:italic">A.   Social Distancing</div><div class="l j" style="left:90.5px;top:472.6px;width:349.8px;font-size:15.05px">network x-ray this patients and of in methods images test</div><div class="l j" style="left:69.5px;top:489.3px;width:370.8px;font-size:15.05px">for x-ray chest vector with results infected using is</div><div class="l j" style="left:69.5px;top:505.9px;width:370.8px;font-size:15.05px">using be is respiratory method spread can image used people</div><div class="l j" style="left:69.5px;top:522.6px;width:370.8px;font-size:15.05px">techniques classification learning test infected to regression</div><div class="l j" style="left:69.5px;top:539.2px;width:370.8px;font-size:15.05px">ct symptoms symptoms disease and on is to scan approach</div><div class="l j" style="left:69.5px;top:555.9px;width:370.8px;font-size:15.05px">decision from time method dataset is symptoms it data</div><div class="l" style="left:69.5px;top:572.5px;width:370.8px;font-size:15.05px">scans network method algorithm images</div><div class="l j" style="left:90.5px;top:597.2px;width:349.8px;font-size:15.05px">in in early medical ct early diagnosis algorithm training</div><div class="l j" style="left:69.5px;top:613.8px;width:370.8px;font-size:15.05px">cases lungs x-ray this data time which with disease performance</div><div class="l" style="left:69.5px;top:630.5px;width:370.8px;font-size:15.05px">symptoms covid-19 approach feature approach</div><div class="l" style="left:69.5px;top:670.0px;font-size:15.05px;font-style:italic">A.   Prediction through text processing</div><div class="l j" style="left:90.5px;top:689.6px;width:349.8px;font-size:15.05px">infected from symptoms learning image as model network</div><div class="l j" style="left:69.5px;top:706.3px;width:370.8px;font-size:15.05px">cases as classification diagnosis test medical health</div><div class="l j" style="left:69.5px;top:722.9px;width:370.8px;font-size:15.05px">patients and is scan chest scan is machine disease testing</div><div class="l j" style="left:69.5px;top:739.6px;width:370.8px;font-size:15.05px">used network that datasets using healthcare results it</div><div class="l j" style="left:69.5px;top:756.2px;width:370.8px;font-size:15.05px">the performance machine regression virus as used image</div><div class="l" style="left:69.5px;top:772.9px;width:370.8px;font-size:15.05px">ct time approach people algorithms</div><div class="l" style="left:69.5px;top:801.0px;font-size:15.05px;font-style:italic">C.   COVID-19 cases function</div><div class="l j" style="left:90.5px;top:820.6px;width:349.8px;font-size:15.05px">and it in infected of prediction vector dataset the with</div><div class="l j" style="left:69.5px;top:837.3px;width:370.8px;font-size:15.05px">x-ray machine analysis approach image be covid-19 can</div><div class="l j" style="left:69.5px;top:853.9px;width:370.8px;font-size:15.05px">can technique the be and of time system on symptoms a</div><div class="l j" style="left:69.5px;top:870.6px;width:370.8px;font-size:15.05px">the it detection health in time and algorithm it regression</div><div class="l" style="left:69.5px;top:887.2px;width:370.8px;font-size:15.05px">machine spread people of are by</div><div class="l c" style="left:69.5px;top:930.0px;width:370.8px;font-size:15.05px">IV.   ALGORITHMS USED</div><div class="l j" style="left:90.5px;top:949.6px;width:349.8px;font-size:15.05px">with algorithm machine support learning chest medical</div><div class="l j" style="left:69.5px;top:966.3px;width:370.8px;font-size:15.05px">covid-19 random the of deep algorithm system using classification</div><div class="l" style="left:69.5px;top:982.9px;width:370.8px;font-size:15.05px">prediction machine diagnosis</div><div class="l" style="left:69.5px;top:1024.0px;font-size:15.05px;font-style:italic">A.   Support Vector Machine (SVM)</div><div class="l j" style="left:90.5px;top:1043.7px;width:349.8px;font-size:15.05px">symptoms image to scan of early algorithms that and learning</div><div class="l j" style="left:69.5px;top:1060.3px;width:370.8px;font-size:15.05px">datasets models time scans on images detection lungs infected</div><div class="l j" style="left:69.5px;top:1077.0px;width:370.8px;font-size:15.05px">test detection datasets in of network and scans results</div><div class="l j" style="left:69.5px;top:1093.6px;width:370.8px;font-size:15.05px">the x-ray patients the methods in performance for disease</div><div class="l j" style="left:69.5px;top:1110.3px;width:370.8px;font-size:15.05px">datasets patients algorithms learning detection analysis</div><div class="l j" style="left:69.5px;top:1126.9px;width:370.8px;font-size:15.05px">covid-19 medical methods be tree datasets decision based</div><div class="l" style="left:69.5px;top:1143.6px;width:370.8px;font-size:15.05px">dataset scans lungs that random</div><div class="l j" style="left:489.4px;top:74.0px;width:349.8px;font-size:15.05px">an x-ray is virus to random an scans is of that based</div><div class="l j" style="left:468.4px;top:90.7px;width:370.8px;font-size:15.05px">x-ray approach and classification to are on data feature</div><div class="l" style="left:468.4px;top:107.3px;width:370.8px;font-size:15.05px">based early machine is analysis</div><svg class="a" style="left:500px;top:150px" width="340" height="230" viewBox="0 0 340 230"><path d="M20 10 V205 H330" stroke="#333" stroke-width="2" fill="none"/><path d="M40 200 L165 60 L230 30 H290" stroke="#222" stroke-width="3" fill="none"/><path d="M120 40 V110" stroke="#555" stroke-width="2"/><circle cx="60" cy="70" r="8" fill="#2a8ad4"/><circle cx="95" cy="55" r="8" fill="#2a8ad4"/><circle cx="130" cy="60" r="8" fill="#2a8ad4"/><circle cx="75" cy="100" r="8" fill="#2a8ad4"/><circle cx="110" cy="90" r="8" fill="#2a8ad4"/><circle cx="150" cy="80" r="8" fill="#2a8ad4"/><circle cx="55" cy="130" r="8" fill="#2a8ad4"/><circle cx="90" cy="125" r="8" fill="#2a8ad4"/><circle cx="180" cy="50" r="8" fill="#2a8ad4"/><circle cx="115" cy="125" r="8" fill="#ef7d22"/><circle cx="140" cy="110" r="8" fill="#ef7d22"/><circle cx="100" cy="150" r="8" fill="#ef7d22"/><circle cx="165" cy="95" r="8" fill="#ef7d22"/><text x="190" y="120" font-size="26" fill="#e0407a" text-anchor="middle">★</text><text x="225" y="110" font-size="26" fill="#e0407a" text-anchor="middle">★</text><text x="265" y="130" font-size="26" fill="#e0407a" text-anchor="middle">★</text><text x="205" y="160" font-size="26" fill="#e0407a" text-anchor="middle">★</text><text x="240" y="165" font-size="26" fill="#e0407a" text-anchor="middle">★</text><text x="285" y="175" font-size="26" fill="#e0407a" text-anchor="middle">★</text><text x="170" y="180" font-size="26" fill="#e0407a" text-anchor="middle">★</text><text x="210" y="190" font-size="26" fill="#e0407a" text-anchor="middle">★</text><text x="150" y="170" font-size="26" fill="#e0407a" text-anchor="middle">★</text></svg><div class="l c" style="left:468.4px;top:375.0px;width:370.8px;font-size:15.05px">Fig. 2.   SVM Illustration</div><div class="l" style="left:468.4px;top:412.0px;font-size:15.05px;font-style:italic">B.   KNN (K Nearest Neighbour)</div><div class="l j" style="left:489.4px;top:431.6px;width:349.8px;font-size:15.05px">in algorithms lungs and testing test feature proposed</div><div class="l j" style="left:468.4px;top:448.3px;width:370.8px;font-size:15.05px">data be the on using on neural scans this cases disease</div><div class="l j" style="left:468.4px;top:464.9px;width:370.8px;font-size:15.05px">testing accuracy algorithms people as is of prediction</div><div class="l j" style="left:468.4px;top:481.6px;width:370.8px;font-size:15.05px">patients test clinical approach learning features results</div><div class="l" style="left:468.4px;top:498.2px;width:370.8px;font-size:15.05px">to regression scan image regression ct</div><div class="l j" style="left:489.4px;top:540.0px;width:349.8px;font-size:15.05px">a testing in analysis for that images learning is for</div><div class="l j" style="left:468.4px;top:556.6px;width:370.8px;font-size:15.05px">forest network results used feature decision a medical</div><div class="l j" style="left:468.4px;top:573.3px;width:370.8px;font-size:15.05px">is and the classification using algorithm the and random</div><div class="l" style="left:468.4px;top:589.9px;width:370.8px;font-size:15.05px">to detection be prediction</div><svg class="a" style="left:520px;top:600px" width="260" height="250" viewBox="0 0 260 250"><path d="M20 10 V230 H240" stroke="#333" stroke-width="2" fill="none"/><circle cx="125" cy="120" r="55" stroke="#555" stroke-width="2" stroke-dasharray="5 4" fill="none"/><circle cx="125" cy="120" r="28" stroke="#555" stroke-width="2" stroke-dasharray="5 4" fill="none"/><circle cx="125" cy="120" r="8" fill="#f2c230"/><text x="60" y="60" font-size="24" fill="#d83030" text-anchor="middle">★</text><text x="90" y="70" font-size="24" fill="#d83030" text-anchor="middle">★</text><text x="70" y="100" font-size="24" fill="#d83030" text-anchor="middle">★</text><text x="100" y="105" font-size="24" fill="#d83030" text-anchor="middle">★</text><text x="120" y="90" font-size="24" fill="#d83030" text-anchor="middle">★</text><text x="145" y="95" font-size="24" fill="#d83030" text-anchor="middle">★</text><path d="M170 111 L179 127 H161 Z" fill="#2aa84a"/><path d="M195 109 L204 125 H186 Z" fill="#2aa84a"/><path d="M215 126 L224 142 H206 Z" fill="#2aa84a"/><path d="M180 141 L189 157 H171 Z" fill="#2aa84a"/><path d="M200 161 L209 177 H191 Z" fill="#2aa84a"/><path d="M140 141 L149 157 H131 Z" fill="#2aa84a"/><text x="150" y="28" font-size="16" fill="#d83030">Class A</text><text x="150" y="48" font-size="16" fill="#2aa84a">Class B</text></svg><div class="l c" style="left:468.4px;top:863.0px;width:370.8px;font-size:15.05px">Fig. 3.   KNN Illustration</div><div class="l" style="left:468.4px;top:903.0px;font-size:15.05px;font-style:italic">C.   Deep SORT algorithm</div><div class="l j" style="left:489.4px;top:922.6px;width:349.8px;font-size:15.05px">and analysis chest images people datasets it datasets</div><div class="l j" style="left:468.4px;top:939.3px;width:370.8px;font-size:15.05px">based of in algorithm the can forest diagnosis features</div><div class="l j" style="left:468.4px;top:955.9px;width:370.8px;font-size:15.05px">classification system results random on techniques patients</div><div class="l j" style="left:468.4px;top:972.6px;width:370.8px;font-size:15.05px">x-ray which image scan for early in training symptoms</div><div class="l j" style="left:468.4px;top:989.2px;width:370.8px;font-size:15.05px">clinical features which infected be with medical tree</div><div class="l" style="left:468.4px;top:1005.9px;width:370.8px;font-size:15.05px">disease by scans datasets</div><div class="l" style="left:468.4px;top:1044.0px;font-size:15.05px;font-style:italic">D.   Naive Bayes algorithm</div><div class="l j" style="left:489.4px;top:1063.7px;width:349.8px;font-size:15.05px">of approach model detection from scans system tree models</div><div class="l j" style="left:468.4px;top:1080.3px;width:370.8px;font-size:15.05px">diagnosis is deep lungs this methods methods using health</div><div class="l j" style="left:468.4px;top:1097.0px;width:370.8px;font-size:15.05px">used test images in medical patients proposed image based</div><div class="l j" style="left:468.4px;top:1113.6px;width:370.8px;font-size:15.05px">image diagnosis can method support learning features for</div><div class="l j" style="left:468.4px;top:1130.3px;width:370.8px;font-size:15.05px">x-ray images image performance machine detection early</div><div class="l" style="left:468.4px;top:1146.9px;width:370.8px;font-size:15.05px">early analysis in be the</div><div class="l c" style="left:0;top:1245px;width:909px;font-size:10.5px;font-weight:bold">Authorized licensed use limited to: IEEE Xplore. Downloaded on March 07,2022 at 09:11:22 UTC from IEEE Xplore.  Restrictions apply.</div></div></div></div><div class="a" style="left:133px;top:888.0px;width:100px;text-align:center;font-size:15px;line-height:20px;color:#333">3</div><div class="a" style="left:94px;top:938px;width:176.5px;height:249.6px;overflow:hidden;background:#fff;box-shadow:0 0 4px rgba(0,0,0,.13)"><div class="a" style="left:0;top:0;width:909px;height:1286px;transform-origin:0 0;transform:scale(0.19417);text-rendering:geometricPrecision;-webkit-text-stroke:0.25px #222"><div class="a ser" style="left:0;top:0;width:909px;height:1286px;background:#fff;color:#111"><div class="l j" style="left:90.5px;top:80.0px;width:349.8px;font-size:15.05px">prediction detection approach test a methods detection</div><div class="l j" style="left:69.5px;top:96.7px;width:370.8px;font-size:15.05px">this is learning random support learning with test techniques</div><div class="l j" style="left:69.5px;top:113.3px;width:370.8px;font-size:15.05px">model approach forest medical lungs the be spread random</div><div class="l j" style="left:69.5px;top:130.0px;width:370.8px;font-size:15.05px">of tree neural virus in test network an a disease images</div><div class="l j" style="left:69.5px;top:146.6px;width:370.8px;font-size:15.05px">in random to early disease of features scan models test</div><div class="l j" style="left:69.5px;top:163.3px;width:370.8px;font-size:15.05px">based tree algorithms with disease in datasets symptoms</div><div class="l j" style="left:69.5px;top:179.9px;width:370.8px;font-size:15.05px">training for scan by x-ray respiratory symptoms can spread</div><div class="l j" style="left:69.5px;top:196.6px;width:370.8px;font-size:15.05px">deep as early which x-ray of used scan method lungs algorithms</div><div class="l j" style="left:69.5px;top:213.2px;width:370.8px;font-size:15.05px">scans is algorithms is health accuracy scans scans and</div><div class="l j" style="left:69.5px;top:229.9px;width:370.8px;font-size:15.05px">results time patients x-ray to ct disease the people which</div><div class="l j" style="left:69.5px;top:246.5px;width:370.8px;font-size:15.05px">infected are as ct healthcare results system which it</div><div class="l j" style="left:69.5px;top:263.2px;width:370.8px;font-size:15.05px">of is symptoms an time x-ray as healthcare tree test in</div><div class="l j" style="left:69.5px;top:279.8px;width:370.8px;font-size:15.05px">performance data an neural method which technique data</div><div class="l j" style="left:69.5px;top:296.4px;width:370.8px;font-size:15.05px">for be chest dataset patients algorithm it a training</div><div class="l j" style="left:69.5px;top:313.1px;width:370.8px;font-size:15.05px">classification is forest spread chest as and tree the</div><div class="l j" style="left:69.5px;top:329.7px;width:370.8px;font-size:15.05px">which spread covid-19 tree ct decision patients prediction</div><div class="l j" style="left:69.5px;top:346.4px;width:370.8px;font-size:15.05px">based health virus a ct technique which chest accuracy</div><div class="l j" style="left:69.5px;top:363.0px;width:370.8px;font-size:15.05px">this can image and learning a cases models in lungs features</div><div class="l j" style="left:69.5px;top:379.7px;width:370.8px;font-size:15.05px">this chest random system symptoms regression algorithms</div><div class="l" style="left:69.5px;top:396.3px;width:370.8px;font-size:15.05px">algorithms support image infected chest</div><div class="l j" style="left:489.4px;top:80.0px;width:349.8px;font-size:15.05px">respiratory test approach performance proposed model and</div><div class="l j" style="left:468.4px;top:96.7px;width:370.8px;font-size:15.05px">the tree dataset analysis diagnosis approach tree system</div><div class="l j" style="left:468.4px;top:113.3px;width:370.8px;font-size:15.05px">model prediction ct be for it accuracy people results</div><div class="l j" style="left:468.4px;top:130.0px;width:370.8px;font-size:15.05px">as proposed performance techniques respiratory a a spread</div><div class="l j" style="left:468.4px;top:146.6px;width:370.8px;font-size:15.05px">it on to classification and techniques on is performance</div><div class="l j" style="left:468.4px;top:163.3px;width:370.8px;font-size:15.05px">testing early from to for decision to the are learning</div><div class="l j" style="left:468.4px;top:179.9px;width:370.8px;font-size:15.05px">it dataset method data the and covid-19 for neural decision</div><div class="l j" style="left:468.4px;top:196.6px;width:370.8px;font-size:15.05px">images which features decision using system an images</div><div class="l j" style="left:468.4px;top:213.2px;width:370.8px;font-size:15.05px">performance training disease vector medical decision performance</div><div class="l j" style="left:468.4px;top:229.9px;width:370.8px;font-size:15.05px">diagnosis classification test in patients based ct which</div><div class="l j" style="left:468.4px;top:246.5px;width:370.8px;font-size:15.05px">spread using models features testing data medical are</div><div class="l j" style="left:468.4px;top:263.2px;width:370.8px;font-size:15.05px">machine is spread results approach cases technique support</div><div class="l j" style="left:468.4px;top:279.8px;width:370.8px;font-size:15.05px">the be images deep regression x-ray in test medical testing</div><div class="l j" style="left:468.4px;top:296.4px;width:370.8px;font-size:15.05px">test healthcare an results feature on proposed detection</div><div class="l j" style="left:468.4px;top:313.1px;width:370.8px;font-size:15.05px">model decision is is methods technique images algorithms</div><div class="l j" style="left:468.4px;top:329.7px;width:370.8px;font-size:15.05px">spread support respiratory classification to the is in</div><div class="l j" style="left:468.4px;top:346.4px;width:370.8px;font-size:15.05px">covid-19 can methods decision regression people scans</div><div class="l j" style="left:468.4px;top:363.0px;width:370.8px;font-size:15.05px">techniques results is it dataset detection decision early</div><div class="l j" style="left:468.4px;top:379.7px;width:370.8px;font-size:15.05px">a and is the health accuracy algorithm be technique accuracy</div><div class="l" style="left:468.4px;top:396.3px;width:370.8px;font-size:15.05px">covid-19 scan support algorithm vector</div></div></div></div><!--/THUMBS--></div>
  <div id="doc"><!--DOC-->
<div class="a" style="left:25px;top:88px;width:803px;height:870px;background:#fff;overflow:hidden;box-shadow:0 0 5px rgba(0,0,0,.11)">
<div class="a ser" style="left:0;top:0;width:909px;height:1286px">
<div class="l " style="left:55.00px;top:27.81px;font-size:12.29px;font-weight:bold;font-style:italic;">2022 International Conference for Advancement in Technology (ICONAT)</div>
<div class="l " style="left:55.00px;top:41.71px;font-size:12.29px;font-weight:bold;font-style:italic;">Goa, India. Jan 21-22, 2022</div>
<div class="l c" style="left:55.00px;top:83.81px;font-size:36.65px;width:800.00px;">AI Techniques for Detecting and Diagnosing</div>
<div class="l c" style="left:55.00px;top:125.01px;font-size:36.65px;width:800.00px;">COVID-19</div>
<div class="l c" style="left:28.70px;top:207.31px;font-size:13.72px;width:300.00px;">Kshitij C Kurne</div>
<div class="l c" style="left:28.70px;top:222.51px;font-size:13.72px;width:300.00px;font-style:italic;">Department of Computer Science and</div>
<div class="l c" style="left:28.70px;top:238.11px;font-size:13.72px;width:300.00px;font-style:italic;">Engineering.</div>
<div class="l c" style="left:28.70px;top:254.11px;font-size:13.72px;width:300.00px;font-style:italic;">M S Ramaiah Institute of Technology,</div>
<div class="l c" style="left:28.70px;top:270.01px;font-size:13.72px;width:300.00px;">Bengaluru, India</div>
<div class="l c" style="left:28.70px;top:285.71px;font-size:13.72px;width:300.00px;">kkurne7@gmail.com</div>
<div class="l c" style="left:304.50px;top:207.31px;font-size:13.72px;width:300.00px;">Sini Anna Alex</div>
<div class="l c" style="left:304.50px;top:222.51px;font-size:13.72px;width:300.00px;font-style:italic;">Department of Computer Science and</div>
<div class="l c" style="left:304.50px;top:238.11px;font-size:13.72px;width:300.00px;font-style:italic;">Engineering</div>
<div class="l c" style="left:304.50px;top:254.11px;font-size:13.72px;width:300.00px;font-style:italic;">M S Ramaiah Institute of Technology,</div>
<div class="l c" style="left:304.50px;top:270.01px;font-size:13.72px;width:300.00px;">Bengaluru, India</div>
<div class="l c" style="left:580.00px;top:207.31px;font-size:13.72px;width:300.00px;">Parkavi A</div>
<div class="l c" style="left:580.00px;top:222.51px;font-size:13.72px;width:300.00px;font-style:italic;">Department of Computer Science and</div>
<div class="l c" style="left:580.00px;top:238.11px;font-size:13.72px;width:300.00px;font-style:italic;">Engineering</div>
<div class="l c" style="left:580.00px;top:254.11px;font-size:13.72px;width:300.00px;font-style:italic;">M S Ramaiah Institue of Technology,</div>
<div class="l c" style="left:580.00px;top:270.01px;font-size:13.72px;width:300.00px;">Bengaluru, India</div>
<div class="l j" style="left:90.60px;top:319.61px;font-size:13.72px;width:349.70px;font-weight:bold;"><i>Abstract</i>— The new Coronavirus infection (COVID-19)</div>
<div class="l j" style="left:69.50px;top:335.45px;font-size:13.72px;width:370.80px;font-weight:bold;">which has been declared by the World Health Organization</div>
<div class="l j" style="left:69.50px;top:351.29px;font-size:13.72px;width:370.80px;font-weight:bold;">(WHO) has now spread all over the world. As per the few</div>
<div class="l j" style="left:69.50px;top:367.13px;font-size:13.72px;width:370.80px;font-weight:bold;">examinations, the COVID-19 has side effects like dry cough,</div>
<div class="l j" style="left:69.50px;top:382.97px;font-size:13.72px;width:370.80px;font-weight:bold;">sore throat, fever, gentle to direct respiratory disease and</div>
<div class="l j" style="left:69.50px;top:398.81px;font-size:13.72px;width:370.80px;font-weight:bold;">muscle throbs. The COVID-19 causes an adverse consequence</div>
<div class="l j" style="left:69.50px;top:414.65px;font-size:13.72px;width:370.80px;font-weight:bold;">on the lungs, it very well may be analyzed utilizing X-rays and</div>
<div class="l " style="left:69.50px;top:430.49px;font-size:13.72px;width:370.80px;font-weight:bold;">CT scans of the lungs.</div>
<div class="l j" style="left:90.60px;top:461.21px;font-size:13.72px;width:349.70px;font-weight:bold;">As COVID-19 diagnosing is the lengthy process for testing</div>
<div class="l j" style="left:69.50px;top:477.05px;font-size:13.72px;width:370.80px;font-weight:bold;">and the vast majority of the strategies that are proposed might</div>
<div class="l j" style="left:69.50px;top:492.89px;font-size:13.72px;width:370.80px;font-weight:bold;">give false-positive and false-negative result. This paper</div>
<div class="l j" style="left:69.50px;top:508.73px;font-size:13.72px;width:370.80px;font-weight:bold;">predominantly points on the investigation and survey of the</div>
<div class="l j" style="left:69.50px;top:524.57px;font-size:13.72px;width:370.80px;font-weight:bold;">execution of Machine Learning (ML) and Artificial Intelligence</div>
<div class="l j" style="left:69.50px;top:540.41px;font-size:13.72px;width:370.80px;font-weight:bold;">(AI) techniques that are utilized to forestall and control the</div>
<div class="l " style="left:69.50px;top:556.25px;font-size:13.72px;width:370.80px;font-weight:bold;">spread of coronavirus all across the world.</div>
<div class="l j" style="left:90.60px;top:587.01px;font-size:13.72px;width:349.70px;font-weight:bold;font-style:italic;">Keywords—Machine Learning (ML), Artificial Intelligence</div>
<div class="l j" style="left:69.50px;top:602.85px;font-size:13.72px;width:370.80px;font-weight:bold;font-style:italic;">(AI), COVID-19, Coronavirus image based diagnosis, Deep</div>
<div class="l " style="left:69.50px;top:618.69px;font-size:13.72px;width:370.80px;font-weight:bold;font-style:italic;">Learning (DL)</div>
<div class="l " style="left:198.60px;top:656.10px;font-size:15.05px;">I.</div>
<div class="l " style="left:230.70px;top:656.10px;font-size:15.05px;">I<span style="font-size:0.8em">NTRODUCTION</span></div>
<div class="l j" style="left:90.60px;top:679.40px;font-size:15.05px;width:349.70px;">COVID-19 is a infectious disease, that has spread in</div>
<div class="l j" style="left:69.50px;top:696.05px;font-size:15.05px;width:370.80px;">many countries very rapidly. The novel coronavirus, that is,</div>
<div class="l j" style="left:69.50px;top:712.70px;font-size:15.05px;width:370.80px;">SARS-COV-2 which causes COVID-19, belongs to a family</div>
<div class="l j" style="left:69.50px;top:729.35px;font-size:15.05px;width:370.80px;">of coronaviridae, which is a contagious virus. People</div>
<div class="l j" style="left:69.50px;top:746.00px;font-size:15.05px;width:370.80px;">infected with this virus experience flue like symptoms</div>
<div class="l j" style="left:69.50px;top:762.65px;font-size:15.05px;width:370.80px;">including, fever, cough, shortness, of breadth and fatigue.</div>
<div class="l j" style="left:69.50px;top:779.30px;font-size:15.05px;width:370.80px;">The infected person can recover without any special</div>
<div class="l j" style="left:69.50px;top:795.95px;font-size:15.05px;width:370.80px;">treatment, only if the person has experienced mild to</div>
<div class="l j" style="left:69.50px;top:812.60px;font-size:15.05px;width:370.80px;">moderate respiratory illness, but if it is severe then special</div>
<div class="l " style="left:69.50px;top:829.25px;font-size:15.05px;width:370.80px;">treatment has to be provided, as this virus can cause death.</div>
<div class="l j" style="left:90.60px;top:854.40px;font-size:15.05px;width:349.70px;">This disease is prone to the older people, with the</div>
<div class="l j" style="left:69.50px;top:871.05px;font-size:15.05px;width:370.80px;">underlying medical conditions such as diabetes, high blood</div>
<div class="l j" style="left:489.50px;top:319.30px;font-size:15.05px;width:349.70px;">Since Machine Learning (ML) and Artificial Intelligence</div>
<div class="l j" style="left:468.40px;top:335.95px;font-size:15.05px;width:370.80px;">(AI) has brought a major change in the health care industry, which</div>
<div class="l j" style="left:468.40px;top:352.60px;font-size:15.05px;width:370.80px;">that can be used for taking decisions and diagnose the</div>
<div class="l " style="left:468.40px;top:369.25px;font-size:15.05px;width:370.80px;">patients rapidly and accurately.</div>
<div class="l j" style="left:489.50px;top:395.20px;font-size:15.05px;width:349.70px;">AI is a part of software engineering that spotlights on the</div>
<div class="l j" style="left:468.40px;top:411.85px;font-size:15.05px;width:370.80px;">advancement of clever machines, that mimics human</div>
<div class="l j" style="left:468.40px;top:428.50px;font-size:15.05px;width:370.80px;">knowledge like reasoning, critical thinking capacity and</div>
<div class="l j" style="left:468.40px;top:445.15px;font-size:15.05px;width:370.80px;">numerous other human practices which incorporates picking</div>
<div class="l j" style="left:468.40px;top:461.80px;font-size:15.05px;width:370.80px;">up, arranging and anticipating. What&#x27;s more, ML is a subset of</div>
<div class="l j" style="left:468.40px;top:478.45px;font-size:15.05px;width:370.80px;">man-made brainpower that helps programming applications</div>
<div class="l j" style="left:468.40px;top:495.10px;font-size:15.05px;width:370.80px;">to be more precise in foreseeing the results, without being</div>
<div class="l " style="left:468.40px;top:511.75px;font-size:15.05px;width:370.80px;">customized expressly to do as such.</div>
<div class="l j" style="left:489.50px;top:537.90px;font-size:15.05px;width:349.70px;">The main aim of this paper is to systematically, survey,</div>
<div class="l j" style="left:468.40px;top:554.55px;font-size:15.05px;width:370.80px;">analyze and compare the different types of methods and</div>
<div class="l j" style="left:468.40px;top:571.20px;font-size:15.05px;width:370.80px;">techniques that are being used to detect the corona virus</div>
<div class="l " style="left:468.40px;top:587.85px;font-size:15.05px;width:370.80px;">disease and explore the role of AI and ML in it.</div>
<div class="l " style="left:569.40px;top:626.40px;font-size:15.05px;">II.</div>
<div class="l " style="left:603.60px;top:626.40px;font-size:15.05px;">RESEARCH METODS</div>
<div class="l j" style="left:489.50px;top:649.90px;font-size:15.05px;width:349.70px;">A methodology specifies the boundaries of the research</div>
<div class="l j" style="left:468.40px;top:666.55px;font-size:15.05px;width:370.80px;">within which it has to be conducted. So a systematic</div>
<div class="l j" style="left:468.40px;top:683.20px;font-size:15.05px;width:370.80px;">approach has been performed that provides a precise output</div>
<div class="l " style="left:468.40px;top:699.85px;font-size:15.05px;width:370.80px;">related to the corresponding field.</div>
<div class="l " style="left:491.00px;top:725.40px;font-size:15.05px;">The research methodology will give the details about:</div>
<div class="l j" style="left:518.20px;top:752.30px;font-size:15.05px;width:321.00px;">The different sources from where the data is</div>
<div class="l " style="left:518.20px;top:769.00px;font-size:15.05px;width:321.00px;">collected.</div>
<div class="l " style="left:518.20px;top:796.00px;font-size:15.05px;width:321.00px;">Algorithms used.</div>
<div class="l j" style="left:518.20px;top:822.90px;font-size:15.05px;width:321.00px;">Tools and methods that are used to collect the</div>
<div class="l " style="left:518.20px;top:839.60px;font-size:15.05px;width:321.00px;">datasets.</div>
<div class="l " style="left:518.20px;top:866.60px;font-size:15.05px;width:321.00px;">Techniques used for getting the results</div>
<div class="a" style="left:491.4px;top:756.9px;width:5.2px;height:5.2px;border-radius:50%;background:#111"></div>
<div class="a" style="left:491.4px;top:800.6px;width:5.2px;height:5.2px;border-radius:50%;background:#111"></div>
<div class="a" style="left:491.4px;top:827.5px;width:5.2px;height:5.2px;border-radius:50%;background:#111"></div>
<div class="a" style="left:491.4px;top:871.2px;width:5.2px;height:5.2px;border-radius:50%;background:#111"></div>
<div class="l" style="font-family:'Liberation Sans',sans-serif;font-size:11.1px;line-height:12px;left:17px;top:384px;transform-origin:0 0;transform:rotate(-90deg) translateX(-100%);color:#111">2022 International Conference for Advancement in Technology (ICONAT) | 978-1-6654-2577-3/22/$31.00 ©2022 IEEE | DOI: 10.1109/ICONAT53423.2022.9725835</div>
<div class="l j" style="left:69.50px;top:887.70px;font-size:15.05px;width:370.80px;">pressure or chronic diseases such as cardiovascular disease or</div>
<div class="l j" style="left:69.50px;top:904.35px;font-size:15.05px;width:370.80px;">chronic respiratory disease are prone to the virus. People</div>
<div class="l " style="left:69.50px;top:921.00px;font-size:15.05px;width:370.80px;">usually get infected 1 to 14 days prior developing the disease.</div>
<div class="l j" style="left:90.60px;top:945.65px;font-size:15.05px;width:349.70px;">World Health Organization (WHO) has advised all the</div>
<div class="l j" style="left:69.50px;top:962.30px;font-size:15.05px;width:370.80px;">countries to get health checkups as the isolation of the people</div>
<div class="l j" style="left:69.50px;top:978.95px;font-size:15.05px;width:370.80px;">with confirmed cases and with symptoms to the health centers</div>
<div class="l j" style="left:69.50px;top:995.60px;font-size:15.05px;width:370.80px;">will prevent the spread of the virus and also provides a</div>
<div class="l j" style="left:69.50px;top:1012.25px;font-size:15.05px;width:370.80px;">reasonable care to the patients. The people are also advised</div>
<div class="l j" style="left:69.50px;top:1028.90px;font-size:15.05px;width:370.80px;">to maintain social distancing, wear a face mask and sanitize</div>
<div class="l " style="left:69.50px;top:1045.55px;font-size:15.05px;width:370.80px;">the hands frequently.</div>
<div class="l j" style="left:90.60px;top:1070.20px;font-size:15.05px;width:349.70px;">For diagnosing the COVID-19 an RT-PCR swab test is</div>
<div class="l j" style="left:69.50px;top:1086.85px;font-size:15.05px;width:370.80px;">performed, chest tomography scan is done, but it is time</div>
<div class="l j" style="left:69.50px;top:1103.50px;font-size:15.05px;width:370.80px;">consuming test and is sometimes resulting in false negative</div>
<div class="l j" style="left:69.50px;top:1120.15px;font-size:15.05px;width:370.80px;">results. However, with the use of chest X-ray, chest CT scans</div>
<div class="l j" style="left:69.50px;top:1136.80px;font-size:15.05px;width:370.80px;">and other medical imaging techniques can help a lot in</div>
<div class="l " style="left:69.50px;top:1153.45px;font-size:15.05px;width:370.80px;">recognizing the COVID-19.</div>
<div class="l " style="left:550.00px;top:899.60px;font-size:15.05px;">III.</div>
<div class="l " style="left:585.00px;top:899.60px;font-size:15.05px;">D<span style="font-size:0.8em">IAGNOSIS OF </span>COVID-19</div>
<div class="l j" style="left:489.50px;top:922.60px;font-size:15.05px;width:349.70px;">In this section the symptoms of COVID-19, the basic</div>
<div class="l j" style="left:468.40px;top:939.25px;font-size:15.05px;width:370.80px;">steps taken to prevent and diagnose the spread of COVID-</div>
<div class="l " style="left:468.40px;top:955.90px;font-size:15.05px;width:370.80px;">19 based on the medical professionals are discussed.</div>
<div class="l " style="left:468.40px;top:990.60px;font-size:15.05px;font-style:italic;">A.   Symptoms of COVID-19</div>
<div class="l j" style="left:489.50px;top:1013.60px;font-size:15.05px;width:349.70px;">The symptoms of COVID-19 can be divided into two</div>
<div class="l " style="left:468.40px;top:1030.25px;font-size:15.05px;width:370.80px;">categories based on common symptoms and severe cases.</div>
<div class="l j" style="left:489.50px;top:1054.60px;font-size:15.05px;width:349.70px;">Most of the patients infected with coronavirus usually</div>
<div class="l j" style="left:468.40px;top:1071.25px;font-size:15.05px;width:370.80px;">develop common symptoms like fever, tiredness and dry</div>
<div class="l j" style="left:468.40px;top:1087.90px;font-size:15.05px;width:370.80px;">cough whereas few group of people may experience some</div>
<div class="l j" style="left:468.40px;top:1104.55px;font-size:15.05px;width:370.80px;">other symptoms like body aches and pains, nasal congestion,</div>
<div class="l j" style="left:468.40px;top:1121.20px;font-size:15.05px;width:370.80px;">sore throat, diarrhea and many more. In other cases</div>
<div class="l j" style="left:468.40px;top:1137.85px;font-size:15.05px;width:370.80px;">symptoms are more dangerous compared to the common</div>
<div class="l j" style="left:468.40px;top:1154.50px;font-size:15.05px;width:370.80px;">symptoms because they can lead to death of the person.</div>
<div class="l " style="left:60.00px;top:1231.50px;font-size:9.2px;">© IEEE 2022. This article is free to access and download, along with rights for full text and data mining, re-use and analysis.</div>
<div class="l " style="left:120.00px;top:1243.50px;font-size:9.2px;">Authorized licensed use limited to: IEEE Xplore. Downloaded on March 07,2022 at 09:11:22 UTC from IEEE Xplore.  Restrictions apply.</div>
</div></div>
<!--TOOLBAR--><svg class="a" style="left:0;top:0" width="839" height="88" viewBox="465 50 839 88">
<g fill="none" stroke="#333" stroke-width="1.3" stroke-linecap="round" stroke-linejoin="round">
<circle cx="520.6" cy="83.5" r="9.2"/><path d="M515.6 83.5 H525.6"/>
<circle cx="678.6" cy="83.5" r="9.2"/><path d="M673.6 83.5 H683.6 M678.6 78.5 V88.5"/>
</g>
<path d="M635 79.8 H643 L639 85 Z" fill="#707070"/>
<path d="M715.7 75.3 V87.3 M1060.4 75.5 V88 M1136.7 75.5 V88 M1213.5 75.5 V88" stroke="#d4d4d4" stroke-width="1"/>
<g fill="none" stroke="#bdbdbd" stroke-width="1.3" stroke-linecap="round" stroke-linejoin="round">
<path d="M747.5 77.9 H760.4 M748.5 87.7 L754 82.2 L759.5 87.7"/>
<path d="M803 83 L809 77.5 L815 83 M803 88.7 L809 83.2 L815 88.7"/>
</g>
<g fill="none" stroke="#333" stroke-width="1.3" stroke-linecap="round" stroke-linejoin="round">
<path d="M961.8 76.8 L967.9 82.3 L974 76.8 M961.8 82.5 L967.9 88 L974 82.5"/>
<path d="M1016.6 77.9 L1023 83.2 L1029.4 77.9 M1016.4 87.2 H1029.6"/>
<path d="M1094.5 87.5 H1091.5 Q1089.5 87.5 1089.5 85.5 V77.6 Q1089.5 75.6 1091.5 75.6 H1106.8 Q1108.8 75.6 1108.8 77.6 V85.5 Q1108.8 87.5 1106.8 87.5 H1103"/>
<path d="M1164 75.5 Q1164 74.5 1165 74.5 H1187 V90 H1165 Q1164 90 1164 89 Z" />
<path d="M1175.8 71.5 V92.5 M1167.5 78.5 H1172.5 M1167.5 82.3 H1172.5 M1167.5 86 H1172.5 M1179 78.5 H1184 M1179 82.3 H1184 M1179 86 H1184"/>
<rect x="1241" y="72.6" width="12" height="11.5" rx="2.2"/>
<rect x="1250" y="81.8" width="11.6" height="12.2" rx="2.2" fill="#f6f6f6"/>
</g>
<path d="M1098.6 84.8 L1102.4 91.5 H1094.8 Z" fill="#333"/>
<text x="1247" y="82" font-family="Liberation Sans" font-size="9" font-weight="bold" fill="#333" text-anchor="middle">A</text>
<path d="M1255.8 83.5 V84.9 M1252.4 85.6 H1259.2 M1253.3 86.2 L1258.5 92.4 M1258.3 86.2 L1253.1 92.4" stroke="#333" stroke-width="1" fill="none"/>
</svg>
<div class="a" style="left:381.4px;top:16.9px;width:83px;height:28.6px;background:#fff;border:1px solid #dcdcdc;border-radius:5px"></div>
<div class="a" style="left:401px;top:23px;font-size:16.5px;line-height:20px;color:#222;letter-spacing:0px;word-spacing:5px;white-space:pre">1 / 5</div>
<div class="a" style="left:106px;top:24.5px;font-size:16px;line-height:20px;color:#333">92%</div>
<!--/TOOLBAR-->
<!--/DOC--></div>
  <div id="ai"><!--AI--><div class="l" style="left:51.5px;top:24.1px;font-size:14.1px;font-weight:bold;color:#222">UPDF AI</div><div class="a" style="left:441px;top:15.200000000000003px;width:40px;height:29.4px;border:1.3px solid #b995ee;border-radius:7px;background:#f0edf7"></div><div class="a" style="left:16px;top:55px;width:503px;height:1px;background:#e2e2e2"></div><div class="a" style="left:28.3px;top:66.2px;width:470px;height:34.5px;background:#dadada;border-radius:6px"></div><div class="a" style="left:30.9px;top:68.8px;width:232.5px;height:29.7px;background:#fff;border-radius:5px"></div><div class="l" style="left:120.3px;top:76.4px;font-size:15.4px;color:#333;letter-spacing:-0.75px">Ask PDF</div><div class="l" style="left:364.0px;top:76.4px;font-size:15.4px;color:#444;letter-spacing:-0.45px">Chat</div><div class="a" style="left:16px;top:111.5px;width:495px;height:59.5px;background:#fff;border-radius:12px"></div><div class="l" style="left:84.3px;top:125.5px;font-size:14.28px;color:#333">AI_Techniques_for_Detecting_and_Diagnosing_COVID-19</div><div class="l" style="left:84.6px;top:150.1px;font-size:11.5px;color:#a8a8a8;letter-spacing:0px">PDF · 467.7 KB · 5 pages</div><div class="a" style="left:19px;top:181px;width:490px;height:600px;background:#fff;overflow:hidden"><div class="l" style="left:64.4px;top:-10.8px;font-size:15.8px;letter-spacing:0.214px;color:#333">Use of ensemble learning techniques, including Decision</div><div class="l" style="left:64.4px;top:10.4px;font-size:15.8px;letter-spacing:0.188px;color:#333">Trees, Support Vector Machines (SVM), and Random</div><div class="l" style="left:64.4px;top:31.8px;font-size:15.8px;letter-spacing:0.285px;color:#333">Forests for diagnosis;</div><div class="l" style="left:64.4px;top:55.6px;font-size:15.8px;letter-spacing:0.470px;color:#333">Development of mobile applications for symptom</div><div class="a" style="left:53.6px;top:59.4px;width:4.6px;height:4.6px;border-radius:50%;background:#222"></div><div class="l" style="left:64.4px;top:76.7px;font-size:15.8px;letter-spacing:0.129px;color:#333">tracking and risk assessment;</div><div class="l" style="left:64.4px;top:100.4px;font-size:15.8px;letter-spacing:0.281px;color:#333">Implementation of feature extraction techniques using</div><div class="a" style="left:53.6px;top:104.2px;width:4.6px;height:4.6px;border-radius:50%;background:#222"></div><div class="l" style="left:64.4px;top:121.6px;font-size:15.8px;letter-spacing:0.016px;color:#333">Principal Component Analysis (PCA);</div><div class="l" style="left:64.4px;top:145.6px;font-size:15.8px;letter-spacing:0.383px;color:#333">Monitoring social distancing using CNN-based</div><div class="a" style="left:53.6px;top:149.4px;width:4.6px;height:4.6px;border-radius:50%;background:#222"></div><div class="l" style="left:64.4px;top:166.8px;font-size:15.8px;letter-spacing:0.269px;color:#333">algorithms and object detection models like YOLOv3;</div><div class="l" style="left:64.4px;top:190.4px;font-size:15.8px;letter-spacing:0.192px;color:#333">Prediction of COVID-19 cases using text processing and</div><div class="a" style="left:53.6px;top:194.2px;width:4.6px;height:4.6px;border-radius:50%;background:#222"></div><div class="l" style="left:64.4px;top:211.0px;font-size:15.8px;letter-spacing:0.246px;color:#333">machine learning algorithms.</div><div class="l" style="left:64.4px;top:259.3px;font-size:15.8px;letter-spacing:0.285px;color:#333">The significance of this work lies in its potential to</div><div class="a" style="left:53.6px;top:263.1px;width:4.6px;height:4.6px;border-radius:50%;background:#222"></div><div class="l" style="left:64.4px;top:280.6px;font-size:15.8px;letter-spacing:0.275px;color:#333">improve COVID-19 diagnosis through advanced AI and</div><div class="l" style="left:64.4px;top:301.5px;font-size:15.8px;letter-spacing:0.250px;color:#333">ML techniques, addressing urgent healthcare needs</div><div class="l" style="left:64.4px;top:323.0px;font-size:15.8px;letter-spacing:0.334px;color:#333">during the pandemic.</div><div class="l" style="left:64.4px;top:346.7px;font-size:15.8px;letter-spacing:0.359px;color:#333">Innovation point: The integration of multiple AI</div><div class="a" style="left:53.6px;top:350.5px;width:4.6px;height:4.6px;border-radius:50%;background:#222"></div><div class="l" style="left:64.4px;top:367.9px;font-size:15.8px;letter-spacing:0.508px;color:#333">techniques for rapid diagnosis and monitoring of</div><div class="l" style="left:64.4px;top:389.3px;font-size:15.8px;letter-spacing:0.277px;color:#333">COVID-19 is a notable advancement.</div><div class="l" style="left:64.4px;top:413.6px;font-size:15.8px;letter-spacing:0.358px;color:#333">Performance: The methods demonstrated improved</div><div class="a" style="left:53.6px;top:417.4px;width:4.6px;height:4.6px;border-radius:50%;background:#222"></div><div class="l" style="left:64.4px;top:434.2px;font-size:15.8px;letter-spacing:0.335px;color:#333">accuracy and efficiency compared to traditional</div><div class="l" style="left:64.4px;top:455.6px;font-size:15.8px;letter-spacing:0.282px;color:#333">diagnostic approaches.</div><div class="l" style="left:64.4px;top:479.4px;font-size:15.8px;letter-spacing:0.237px;color:#333">Workload: The study highlights the necessity for</div><div class="a" style="left:53.6px;top:483.2px;width:4.6px;height:4.6px;border-radius:50%;background:#222"></div><div class="l" style="left:64.4px;top:500.6px;font-size:15.8px;letter-spacing:0.209px;color:#333">extensive datasets and computational resources, which</div><div class="l" style="left:64.4px;top:522.0px;font-size:15.8px;letter-spacing:0.259px;color:#333">may pose challenges in implementation.</div><div class="l" style="left:14.8px;top:235.5px;font-size:15.6px;font-weight:bold;color:#222;letter-spacing:-0.1px">Conclusion:</div><div class="a" style="left:15.400000000000091px;top:592px;width:460px;height:1px;background:#e6e6e6"></div></div><div class="a" style="left:16.0px;top:793.8px;width:131.0px;height:40px;background:#fff;border-radius:10px"></div><div class="a" style="left:157.3px;top:793.8px;width:114.6px;height:40px;background:#fff;border-radius:10px"></div><div class="a" style="left:281.7px;top:793.8px;width:128.1px;height:40px;background:#f6f6f6;border-radius:10px"></div><div class="l" style="left:53.6px;top:807.2px;font-size:16.6px;color:#333;letter-spacing:-0.1px">Summarize</div><div class="l" style="left:194.8px;top:807.2px;font-size:16.6px;color:#333;letter-spacing:-0.05px">Translate</div><div class="l" style="left:319.8px;top:807.2px;font-size:16.6px;color:#333;letter-spacing:0.85px">Mind Map</div><div class="a" style="left:16.2px;top:844.9px;width:494.5px;height:99.5px;background:#fff;border:1.4px solid #c9a8f3;border-radius:11px"></div><div class="a" style="left:27px;top:859px;width:2px;height:24px;background:#111"></div><div class="l" style="left:29.2px;top:864.7px;font-size:15.7px;color:#a3a3a3;letter-spacing:0px">Ask something</div><div class="a" style="left:26px;top:905.1px;width:30px;height:30px;background:#eef2fc;border-radius:7px"></div><svg class="a" style="left:0;top:0;overflow:visible" width="520" height="963" viewBox="1304 50 520 963">
<defs>
<linearGradient id="bulbg" x1="0" y1="0" x2="0" y2="1"><stop offset="0" stop-color="#c6a6f6"/><stop offset="1" stop-color="#7fcdf2"/></linearGradient>
</defs>
<g transform="translate(1324.4 69)" fill="none" stroke-width="2.8" stroke-linecap="round">
 <path d="M11 6.25 A4.75 4.75 0 1 1 15.75 11" stroke="#2f9ff2"/>
 <path d="M15.75 11 A4.75 4.75 0 1 1 11 15.75" stroke="#2ec98c"/>
 <path d="M11 15.75 A4.75 4.75 0 1 1 6.25 11" stroke="#f3bd1e"/>
 <path d="M6.25 11 A4.75 4.75 0 1 1 11 6.25" stroke="#a56cf0"/>
</g>
<g fill="none" stroke="#a27cf0" stroke-width="1.5"><circle cx="1760.7" cy="80.5" r="4.4"/><circle cx="1769.7" cy="80.5" r="4.4"/></g>
<g fill="none" stroke="#7a7a7a" stroke-width="1.3" stroke-linejoin="round">
 <path d="M1808.6 76.5 V71.8 a1.5 1.5 0 0 1 3 0 V76.5 H1814.5 a1.5 1.5 0 0 1 1.5 1.5 V86.8 a1.6 1.6 0 0 1 -1.6 1.6 H1805.6 a1.6 1.6 0 0 1 -1.6 -1.6 V78 a1.5 1.5 0 0 1 1.5 -1.5 Z"/>
 <path d="M1804 80.4 H1816 M1808.2 83.5 V88.2 M1811.6 83.5 V88.2"/>
</g>
<!-- pdf icon -->
<path d="M1341 176 a2 2 0 0 1 2 -2 H1362.6 L1371.2 182.6 V197 H1341 Z" fill="#9c5af6"/>
<path d="M1362.6 174 V180.6 a2 2 0 0 0 2 2 H1371.2 Z" fill="#cfa9fb"/>
<path d="M1341 197 H1371.2 V209.8 a2 2 0 0 1 -2 2 H1343 a2 2 0 0 1 -2 -2 Z" fill="#8a2ef2"/>
<rect x="1341" y="195.3" width="7.5" height="2.2" fill="#f59a52"/><rect x="1348.5" y="195.3" width="7.5" height="2.2" fill="#58c2c8"/><rect x="1356" y="195.3" width="7.5" height="2.2" fill="#5a9df2"/><rect x="1363.5" y="195.3" width="7.7" height="2.2" fill="#c79df5"/>
<text x="1356.1" y="208.6" font-family="Liberation Sans" font-weight="bold" font-size="10.4" fill="#fff" text-anchor="middle">PDF</text>
<!-- actions -->
<g fill="none" stroke="#444" stroke-width="1.4" stroke-linejoin="round" stroke-linecap="round">
 <path d="M1701.6 802.3 a2.6 2.6 0 0 1 -2.3 -2.6 V792 a2.8 2.8 0 0 1 2.8 -2.8 H1710 a2.8 2.8 0 0 1 2.8 2.4"/>
 <rect x="1703.3" y="793.3" width="13.4" height="13.4" rx="3"/>
 <path d="M1744.4 796.3 a2.2 2.2 0 0 1 2.2 -2.2 H1749.8 L1753.6 789.3 a1.3 1.3 0 0 1 2.3 1.2 L1755.2 794.2 H1760.5 a2 2 0 0 1 1.9 2.6 L1760.2 804.6 a2.8 2.8 0 0 1 -2.7 2 H1746.6 a2.2 2.2 0 0 1 -2.2 -2.2 Z M1748.5 794.2 V806.6"/>
 <path d="M1799.6 799.4 a2.2 2.2 0 0 1 -2.2 2.2 H1794.2 L1790.4 806.4 a1.3 1.3 0 0 1 -2.3 -1.2 L1788.8 801.6 H1783.5 a2 2 0 0 1 -1.9 -2.6 L1783.8 791.2 a2.8 2.8 0 0 1 2.7 -2 H1797.4 a2.2 2.2 0 0 1 2.2 2.2 Z M1795.5 801.6 V789.2"/>
</g>
<path d="M1729.5 790 V803" stroke="#e0e0e0" stroke-width="1"/>
<!-- chip icons -->
<g fill="none" stroke="#333" stroke-width="1.3" stroke-linecap="round">
 <path d="M1336 858.8 H1348.2 M1336 864.6 H1348.2 M1336 870.3 H1348.2"/>
 <path d="M1331.6 858.8 H1332 M1331.6 864.6 H1332 M1331.6 870.3 H1332" stroke-width="1.8"/>
 <rect x="1471.5" y="854.5" width="10.5" height="11" rx="1.2"/>
 <rect x="1479.5" y="863" width="10" height="10.6" rx="1.2" fill="#fff"/>
 <path d="M1604.5 857 a3 3 0 0 0 -3 3 V869 a3 3 0 0 0 3 3 M1596.5 864.5 H1604.5 M1599 862 L1596.5 864.5 L1599 867"/>
 <rect x="1608" y="855" width="7" height="3.4" rx="1.7"/><rect x="1608" y="862.8" width="7" height="3.4" rx="1.7"/><rect x="1608" y="870.5" width="7" height="3.4" rx="1.7"/>
</g>
<text x="1476.7" y="863.2" font-family="Liberation Sans" font-weight="bold" font-size="9" fill="#333" text-anchor="middle">A</text>
<path d="M1484.5 864.6 V865.8 M1481.7 866.5 H1487.3 M1482.5 867 L1486.7 872 M1486.5 867 L1482.3 872" stroke="#333" stroke-width="0.95" fill="none"/>
<!-- bulb -->
<g stroke="#3c3c3c" stroke-width="1.2" stroke-linecap="round">
 <path d="M1344 959 V961 M1336.6 961.9 L1338 963.2 M1351.4 961.9 L1350 963.2 M1333.8 969.3 H1335.6 M1352.4 969.3 H1354.2"/>
 <path d="M1340.9 975.8 a6.4 6.4 0 1 1 6.2 0 V977 H1340.9 Z" fill="url(#bulbg)"/>
 <rect x="1341.3" y="977" width="5.4" height="2.6" rx="1" fill="#fff"/>
</g>
<!-- input icons -->
<g fill="none" stroke="#3a3a3a" stroke-width="1.3" stroke-linecap="round" stroke-linejoin="round">
 <rect x="1701.5" y="962.6" width="17" height="14.6" rx="3"/>
 <circle cx="1706.3" cy="967.4" r="0.6" fill="#3a3a3a"/>
 <path d="M1704.5 977 a3.5 3.5 0 0 1 6 -1.5 a5 5 0 0 1 8 -3.5"/>
 <path d="M1742 961.5 V974.8 a1.6 1.6 0 0 0 1.6 1.6 H1757 M1740.5 964 H1754.8 a1.6 1.6 0 0 1 1.6 1.6 V979"/>
 <path d="M1749.2 966.5 V972.5 M1746.2 969.5 H1752.2" stroke-width="1.1"/>
 <path d="M1752.5 966 L1753.5 967" stroke-width="1"/>
</g>
<path d="M1781 962.5 L1799.5 970.7 L1781 979 L1783.5 970.7 Z" fill="#c3b3fa"/>
<path d="M1783.5 970.7 H1789.5" stroke="#fff" stroke-width="1"/>
<!-- arrow -->
<path d="M1629 619.5 H1664 V722.2 H1682.2 L1648 823.3 L1613.3 722.2 H1629 Z" fill="#4343c9"/>
</svg><!--/AI--></div>
  <div id="rtb"><!--RTB--><svg class="a" style="left:0;top:0" width="76" height="963" viewBox="1824 50 76 963">
<g fill="none" stroke="#333" stroke-width="1.4" stroke-linecap="round" stroke-linejoin="round">
 <circle cx="1863.8" cy="78.6" r="7.4"/>
 <path d="M1869.2 84.2 L1875.3 89.6" stroke-width="2.4"/>
 <path d="M1860.5 76.5 a4 4 0 0 1 1.5 -2.5" stroke-width="1.2"/>
</g>
<path d="M1858.8 115.5 H1871" stroke="#cdcdcd" stroke-width="1"/>
<g fill="none" stroke="#333" stroke-width="1.3" stroke-linecap="round" stroke-linejoin="round">
 <path d="M1856.2 146.6 V142.5 a2.5 2.5 0 0 1 2.5 -2.5 H1872.6 a2.5 2.5 0 0 1 2.5 2.5 V146.6"/>
 <path d="M1853.6 146.6 H1877.8"/>
 <path d="M1856.2 149.3 V158 a2.2 2.2 0 0 0 2.2 2.2 H1872.9 a2.2 2.2 0 0 0 2.2 -2.2 V149.3"/>
</g>
<text x="1865.6" y="158" font-family="Liberation Mono" font-weight="bold" font-size="7.6" fill="#333" text-anchor="middle" letter-spacing="0.2">OCR</text>
<g fill="none" stroke="#333" stroke-width="1.3" stroke-linecap="round" stroke-linejoin="round">
 <path d="M1868.4 190.5 H1858.4 a2.2 2.2 0 0 0 -2.2 2.2 V209.6 a2.2 2.2 0 0 0 2.2 2.2 H1871.4 a2.2 2.2 0 0 0 2.2 -2.2 V195.7 Z"/>
 <path d="M1868.4 190.5 V195.7 H1873.6"/>
 <path d="M1861 201.5 a4.8 4.8 0 0 1 8.6 -2.4 M1869.6 196.8 V199.3 H1867.2"/>
 <path d="M1869.2 203.6 a4.8 4.8 0 0 1 -8.6 2.4 M1860.6 208.3 V205.8 H1863"/>

 <path d="M1862.5 261.5 H1858.4 a2.2 2.2 0 0 1 -2.2 -2.2 V242.5 a2.2 2.2 0 0 1 2.2 -2.2 H1868.4 L1873.6 245.5 V249"/>
 <path d="M1868.4 240.3 V245.5 H1873.6"/>
 <rect x="1865" y="253.5" width="10" height="8" rx="1.2"/>
 <path d="M1867.3 253.5 V251.6 a2.7 2.7 0 0 1 5.4 0 V253.5"/>

 <path d="M1860 298.3 H1858.4 a2.2 2.2 0 0 0 -2.2 2.2 V310 a2.2 2.2 0 0 0 2.2 2.2 H1872.4 a2.2 2.2 0 0 0 2.2 -2.2 V300.5 a2.2 2.2 0 0 0 -2.2 -2.2 H1870.8"/>
 <path d="M1865.4 305.5 V291.3 M1861.3 295.2 L1865.4 291.2 L1869.5 295.2"/>

 <rect x="1856.2" y="342.9" width="18.6" height="16.8" rx="2.2"/>
 <path d="M1858.6 346.6 L1865.5 352.2 L1872.4 346.6"/>
</g>
<path d="M1858.8 386.9 H1871" stroke="#cdcdcd" stroke-width="1"/>
<g fill="none" stroke="#333" stroke-width="1.4" stroke-linecap="round" stroke-linejoin="round">
 <path d="M1859.4 413.3 H1870.4 L1873.8 416.7 V428.6 a2.9 2.9 0 0 1 -2.9 2.9 H1859.4 a2.9 2.9 0 0 1 -2.9 -2.9 V416.2 a2.9 2.9 0 0 1 2.9 -2.9 Z"/>
 <path d="M1861.8 413.5 V416.4 H1868.4 V413.5"/>
 <circle cx="1865.2" cy="424.2" r="2.8"/>
</g>
<path d="M1858.8 458.2 H1871" stroke="#dadada" stroke-width="1"/>
<g fill="none" stroke="#b8b8b8" stroke-width="1.3" stroke-linecap="round" stroke-linejoin="round">
 <path d="M1862.4 486.5 L1858.8 490 L1862.4 493.5 M1859 490 H1868.4 a4.6 4.6 0 0 1 0 9.2 H1862"/>
 <path d="M1868.4 536.8 L1872 540.3 L1868.4 543.8 M1871.8 540.3 H1862.4 a4.6 4.6 0 0 0 0 9.2 H1868.8"/>
</g>
<rect x="1840.8" y="910.8" width="54.6" height="55" fill="none" stroke="#3e3ec8" stroke-width="9.8"/>
<rect x="1850" y="924.8" width="30" height="30.2" rx="5" fill="#fff"/>
<g transform="translate(1853.9 928.5)" fill="none" stroke-width="2.8" stroke-linecap="round">
 <path d="M11 6.25 A4.75 4.75 0 1 1 15.75 11" stroke="#2f9ff2"/>
 <path d="M15.75 11 A4.75 4.75 0 1 1 11 15.75" stroke="#2ec98c"/>
 <path d="M11 15.75 A4.75 4.75 0 1 1 6.25 11" stroke="#f3bd1e"/>
 <path d="M6.25 11 A4.75 4.75 0 1 1 11 6.25" stroke="#a56cf0"/>
</g>
<g fill="none" stroke="#333" stroke-width="1.3" stroke-linejoin="round" stroke-linecap="round">
 <path d="M1858.5 980.3 H1872.9 a2.2 2.2 0 0 1 2.2 2.2 V993.4 a2.2 2.2 0 0 1 -2.2 2.2 H1868.4 L1865.6 999.4 L1862.8 995.6 H1858.5 a2.2 2.2 0 0 1 -2.2 -2.2 V982.5 a2.2 2.2 0 0 1 2.2 -2.2 Z"/>
 <path d="M1860 985.3 H1871.5 M1860 988.3 H1871.5 M1860 991.2 H1866.5"/>
</g>
</svg>
<!--/RTB--></div>
<div class="a" style="left:0;top:0;width:1880px;height:1.4px;background:rgba(255,255,255,.95)"></div>
</div>
<div class="a" style="left:14.5px;top:77.5px;width:5.2px;height:5.2px;border-radius:50%;background:#b98cf0"></div>
</body></html>
